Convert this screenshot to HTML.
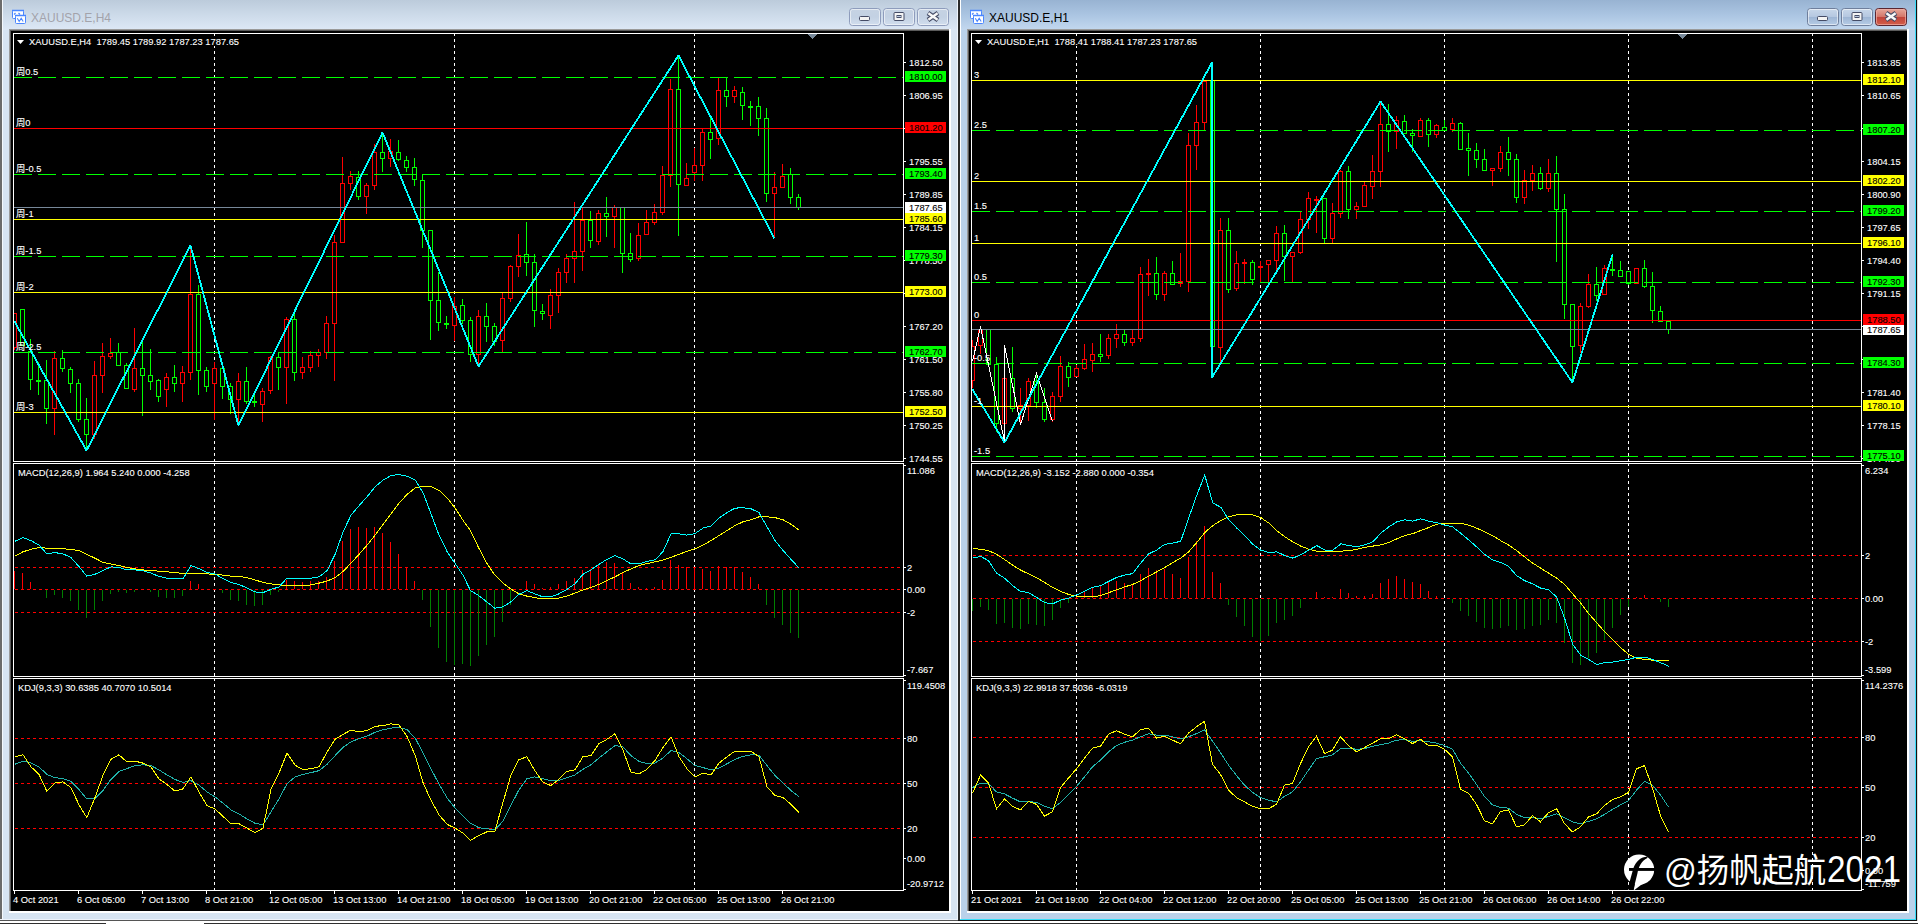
<!DOCTYPE html>
<html lang="zh"><head><meta charset="utf-8"><title>XAUUSD.E</title>
<style>html,body{margin:0;padding:0;background:#d7e4f2;overflow:hidden}svg text{white-space:pre}</style></head>
<body>
<svg width="1918" height="924" viewBox="0 0 1918 924" font-family="'Liberation Sans','Noto Sans CJK SC',sans-serif" style="display:block">
<defs>
<linearGradient id="gi" x1="0" y1="0" x2="0" y2="1"><stop offset="0" stop-color="#bccbdb"/><stop offset=".45" stop-color="#cbd9e8"/><stop offset="1" stop-color="#dde8f6"/></linearGradient>
<linearGradient id="ga" x1="0" y1="0" x2="0" y2="1"><stop offset="0" stop-color="#98b3d2"/><stop offset=".5" stop-color="#abc5e2"/><stop offset="1" stop-color="#c3d8ef"/></linearGradient>
<linearGradient id="gb" x1="0" y1="0" x2="0" y2="1"><stop offset="0" stop-color="#c9d8ea"/><stop offset=".5" stop-color="#b4c7e0"/><stop offset=".5" stop-color="#9db5d4"/><stop offset="1" stop-color="#b7cde6"/></linearGradient>
<linearGradient id="gbi" x1="0" y1="0" x2="0" y2="1"><stop offset="0" stop-color="#c6d3e3"/><stop offset=".5" stop-color="#c3d1e3"/><stop offset="1" stop-color="#d2deee"/></linearGradient>
<linearGradient id="gc" x1="0" y1="0" x2="0" y2="1"><stop offset="0" stop-color="#e7a99c"/><stop offset=".48" stop-color="#d4776a"/><stop offset=".5" stop-color="#c1433a"/><stop offset="1" stop-color="#d4604a"/></linearGradient>
</defs>
<rect x="0" y="0" width="1918" height="924" fill="#d7e4f2"/>
<rect x="0" y="0" width="960" height="924" fill="#d7e4f2"/>
<rect x="0" y="0" width="960" height="30" fill="url(#gi)"/>
<rect x="9" y="29" width="942" height="884" fill="#fff"/>
<rect x="9" y="29" width="940" height="882" fill="#9a9a9a"/>
<rect x="10" y="30" width="939" height="881" fill="#5a5a5a"/>
<rect x="11" y="31" width="938" height="880" fill="#000"/>
<g fill="#fff" stroke="#4a86ff"><rect x="12.5" y="10.5" width="11" height="8" rx="1"/><rect x="15.5" y="15.5" width="10" height="8" rx="1"/></g>
<path d="M12,10.5h12M15,15.5h11" stroke="#4a86ff" stroke-width="1.6" fill="none"/>
<path d="M14,14.5l1.5,-1.5M18.5,13l1.5,1.5" stroke="#4a86ff" stroke-width="1.2" fill="none"/>
<path d="M17.3,18.3l1.9,3.2l2,-3.2l2,3.2" stroke="#4a86ff" stroke-width="1.1" fill="none"/>
<text x="31" y="22" fill="#a3a3ab" font-size="12">XAUUSD.E,H4</text>
<rect x="849.5" y="8.5" width="31" height="17" rx="3" fill="url(#gbi)" stroke="#8e9cbc"/>
<rect x="850.5" y="9.5" width="29" height="15" rx="2" fill="none" stroke="#fff" stroke-opacity=".55"/>
<rect x="859.5" y="16.5" width="10" height="4" rx="1" fill="#f4f4f4" stroke="#454c66"/>
<rect x="883.5" y="8.5" width="31" height="17" rx="3" fill="url(#gbi)" stroke="#8e9cbc"/>
<rect x="884.5" y="9.5" width="29" height="15" rx="2" fill="none" stroke="#fff" stroke-opacity=".55"/>
<rect x="894.0" y="12.5" width="10" height="8" rx="1" fill="#f4f4f4" stroke="#454c66"/>
<rect x="897.0" y="15.5" width="4" height="2" fill="#b8c8e0" stroke="#454c66"/>
<rect x="917.5" y="8.5" width="31" height="17" rx="3" fill="url(#gbi)" stroke="#8e9cbc"/>
<rect x="918.5" y="9.5" width="29" height="15" rx="2" fill="none" stroke="#fff" stroke-opacity=".55"/>
<path d="M928.0,13l10,7M938.0,13l-10,7" stroke="#454c66" stroke-width="4.6" fill="none"/>
<path d="M928.4,13.3l9.2,6.4M937.6,13.3l-9.2,6.4" stroke="#f8f8f8" stroke-width="2.5" fill="none"/>
<rect x="960" y="0" width="958" height="924" fill="#b9d1ea"/>
<rect x="960" y="0" width="958" height="30" fill="url(#ga)"/>
<rect x="967" y="29" width="942" height="884" fill="#fff"/>
<rect x="967" y="29" width="940" height="882" fill="#9a9a9a"/>
<rect x="968" y="30" width="939" height="881" fill="#5a5a5a"/>
<rect x="969" y="31" width="938" height="880" fill="#000"/>
<g fill="#fff" stroke="#4a86ff"><rect x="970.5" y="10.5" width="11" height="8" rx="1"/><rect x="973.5" y="15.5" width="10" height="8" rx="1"/></g>
<path d="M970,10.5h12M973,15.5h11" stroke="#4a86ff" stroke-width="1.6" fill="none"/>
<path d="M972,14.5l1.5,-1.5M976.5,13l1.5,1.5" stroke="#4a86ff" stroke-width="1.2" fill="none"/>
<path d="M975.3,18.3l1.9,3.2l2,-3.2l2,3.2" stroke="#4a86ff" stroke-width="1.1" fill="none"/>
<text x="989" y="22" fill="#000" font-size="12">XAUUSD.E,H1</text>
<rect x="1807.5" y="8.5" width="31" height="17" rx="3" fill="url(#gb)" stroke="#6f7f9c"/>
<rect x="1808.5" y="9.5" width="29" height="15" rx="2" fill="none" stroke="#fff" stroke-opacity=".55"/>
<rect x="1817.5" y="16.5" width="10" height="4" rx="1" fill="#f4f4f4" stroke="#454c66"/>
<rect x="1841.5" y="8.5" width="31" height="17" rx="3" fill="url(#gb)" stroke="#6f7f9c"/>
<rect x="1842.5" y="9.5" width="29" height="15" rx="2" fill="none" stroke="#fff" stroke-opacity=".55"/>
<rect x="1852.0" y="12.5" width="10" height="8" rx="1" fill="#f4f4f4" stroke="#454c66"/>
<rect x="1855.0" y="15.5" width="4" height="2" fill="#b8c8e0" stroke="#454c66"/>
<rect x="1875.5" y="8.5" width="31" height="17" rx="3" fill="url(#gc)" stroke="#5a2630"/>
<rect x="1876.5" y="9.5" width="29" height="15" rx="2" fill="none" stroke="#f0b0a8" stroke-opacity=".7"/>
<path d="M1886.0,13l10,7M1896.0,13l-10,7" stroke="#454c66" stroke-width="4.6" fill="none"/>
<path d="M1886.4,13.3l9.2,6.4M1895.6,13.3l-9.2,6.4" stroke="#f8f8f8" stroke-width="2.5" fill="none"/>
<rect x="0" y="0" width="2" height="921" fill="#6b6b6b"/>
<rect x="958" y="0" width="2" height="921" fill="#2b2b2b"/>
<rect x="960" y="0" width="1" height="920" fill="#fff"/>
<rect x="957" y="0" width="1" height="920" fill="#eef4fb"/>
<rect x="1915" y="0" width="1" height="920" fill="#38dcf8"/>
<rect x="1916" y="0" width="1" height="921" fill="#111"/>
<rect x="1917" y="0" width="1" height="924" fill="#dcdcdc"/>
<rect x="2" y="0" width="1" height="920" fill="#f4f8fc"/>
<rect x="0" y="919" width="958" height="1" fill="#eef3fb"/>
<rect x="0" y="920" width="958" height="1" fill="#555"/>
<rect x="0" y="921" width="1918" height="2" fill="#fff"/>
<rect x="0" y="923" width="1918" height="1" fill="#303030"/>
<rect x="106" y="923" width="98" height="1" fill="#fff"/>
<rect x="960" y="919" width="956" height="1" fill="#38dcf8"/>
<rect x="958" y="920" width="959" height="1" fill="#111"/>
<rect x="13.5" y="33.5" width="890" height="428" fill="none" stroke="#fff"/>
<rect x="13.5" y="463.5" width="890" height="213" fill="none" stroke="#fff"/>
<rect x="13.5" y="678.5" width="890" height="212" fill="none" stroke="#fff"/>
<g shape-rendering="crispEdges">
<line x1="214.5" y1="33" x2="214.5" y2="462" stroke="#fff" stroke-dasharray="3 3"/>
<line x1="214.5" y1="463" x2="214.5" y2="677" stroke="#fff" stroke-dasharray="3 3"/>
<line x1="214.5" y1="678" x2="214.5" y2="891" stroke="#fff" stroke-dasharray="3 3"/>
<line x1="454.5" y1="33" x2="454.5" y2="462" stroke="#fff" stroke-dasharray="3 3"/>
<line x1="454.5" y1="463" x2="454.5" y2="677" stroke="#fff" stroke-dasharray="3 3"/>
<line x1="454.5" y1="678" x2="454.5" y2="891" stroke="#fff" stroke-dasharray="3 3"/>
<line x1="694.5" y1="33" x2="694.5" y2="462" stroke="#fff" stroke-dasharray="3 3"/>
<line x1="694.5" y1="463" x2="694.5" y2="677" stroke="#fff" stroke-dasharray="3 3"/>
<line x1="694.5" y1="678" x2="694.5" y2="891" stroke="#fff" stroke-dasharray="3 3"/>
<rect x="14" y="313" width="1" height="37" fill="#ff0000"/>
<rect x="12.5" y="313.5" width="4" height="34" fill="#000" stroke="#ff0000"/>
<rect x="22" y="309" width="1" height="36" fill="#00ff00"/>
<rect x="20.5" y="309.5" width="4" height="36" fill="#000" stroke="#00ff00"/>
<rect x="30" y="339" width="1" height="51" fill="#00ff00"/>
<rect x="28.5" y="351.5" width="4" height="28" fill="#000" stroke="#00ff00"/>
<rect x="38" y="362" width="1" height="33" fill="#00ff00"/>
<rect x="36.5" y="380.5" width="4" height="1" fill="#000" stroke="#00ff00"/>
<rect x="46" y="360" width="1" height="64" fill="#00ff00"/>
<rect x="44.5" y="380.5" width="4" height="28" fill="#000" stroke="#00ff00"/>
<rect x="54" y="351" width="1" height="84" fill="#ff0000"/>
<rect x="52.5" y="358.5" width="4" height="50" fill="#000" stroke="#ff0000"/>
<rect x="62" y="350" width="1" height="22" fill="#00ff00"/>
<rect x="60.5" y="358.5" width="4" height="10" fill="#000" stroke="#00ff00"/>
<rect x="70" y="367" width="1" height="26" fill="#00ff00"/>
<rect x="68.5" y="369.5" width="4" height="14" fill="#000" stroke="#00ff00"/>
<rect x="78" y="379" width="1" height="43" fill="#00ff00"/>
<rect x="76.5" y="383.5" width="4" height="36" fill="#000" stroke="#00ff00"/>
<rect x="86" y="398" width="1" height="52" fill="#00ff00"/>
<rect x="84.5" y="419.5" width="4" height="15" fill="#000" stroke="#00ff00"/>
<rect x="94" y="361" width="1" height="78" fill="#ff0000"/>
<rect x="92.5" y="375.5" width="4" height="59" fill="#000" stroke="#ff0000"/>
<rect x="102" y="343" width="1" height="50" fill="#ff0000"/>
<rect x="100.5" y="356.5" width="4" height="19" fill="#000" stroke="#ff0000"/>
<rect x="110" y="338" width="1" height="21" fill="#ff0000"/>
<rect x="108.5" y="353.5" width="4" height="3" fill="#000" stroke="#ff0000"/>
<rect x="118" y="343" width="1" height="22" fill="#00ff00"/>
<rect x="116.5" y="352.5" width="4" height="13" fill="#000" stroke="#00ff00"/>
<rect x="126" y="363" width="1" height="25" fill="#00ff00"/>
<rect x="124.5" y="365.5" width="4" height="23" fill="#000" stroke="#00ff00"/>
<rect x="134" y="328" width="1" height="64" fill="#ff0000"/>
<rect x="132.5" y="368.5" width="4" height="21" fill="#000" stroke="#ff0000"/>
<rect x="142" y="342" width="1" height="74" fill="#00ff00"/>
<rect x="140.5" y="368.5" width="4" height="7" fill="#000" stroke="#00ff00"/>
<rect x="150" y="349" width="1" height="41" fill="#00ff00"/>
<rect x="148.5" y="375.5" width="4" height="6" fill="#000" stroke="#00ff00"/>
<rect x="158" y="379" width="1" height="23" fill="#00ff00"/>
<rect x="156.5" y="380.5" width="4" height="16" fill="#000" stroke="#00ff00"/>
<rect x="166" y="373" width="1" height="34" fill="#ff0000"/>
<rect x="164.5" y="377.5" width="4" height="12" fill="#000" stroke="#ff0000"/>
<rect x="174" y="365" width="1" height="27" fill="#00ff00"/>
<rect x="172.5" y="377.5" width="4" height="6" fill="#000" stroke="#00ff00"/>
<rect x="182" y="366" width="1" height="36" fill="#ff0000"/>
<rect x="180.5" y="372.5" width="4" height="11" fill="#000" stroke="#ff0000"/>
<rect x="190" y="245" width="1" height="135" fill="#ff0000"/>
<rect x="188.5" y="294.5" width="4" height="78" fill="#000" stroke="#ff0000"/>
<rect x="198" y="285" width="1" height="110" fill="#00ff00"/>
<rect x="196.5" y="294.5" width="4" height="76" fill="#000" stroke="#00ff00"/>
<rect x="206" y="367" width="1" height="25" fill="#00ff00"/>
<rect x="204.5" y="370.5" width="4" height="16" fill="#000" stroke="#00ff00"/>
<rect x="214" y="362" width="1" height="58" fill="#ff0000"/>
<rect x="212.5" y="368.5" width="4" height="15" fill="#000" stroke="#ff0000"/>
<rect x="222" y="368" width="1" height="31" fill="#00ff00"/>
<rect x="220.5" y="368.5" width="4" height="18" fill="#000" stroke="#00ff00"/>
<rect x="230" y="383" width="1" height="31" fill="#00ff00"/>
<rect x="228.5" y="386.5" width="4" height="13" fill="#000" stroke="#00ff00"/>
<rect x="238" y="373" width="1" height="51" fill="#ff0000"/>
<rect x="236.5" y="381.5" width="4" height="18" fill="#000" stroke="#ff0000"/>
<rect x="246" y="367" width="1" height="37" fill="#00ff00"/>
<rect x="244.5" y="381.5" width="4" height="20" fill="#000" stroke="#00ff00"/>
<rect x="254" y="395" width="1" height="12" fill="#00ff00"/>
<rect x="252.5" y="401.5" width="4" height="1" fill="#000" stroke="#00ff00"/>
<rect x="262" y="388" width="1" height="34" fill="#ff0000"/>
<rect x="260.5" y="391.5" width="4" height="13" fill="#000" stroke="#ff0000"/>
<rect x="270" y="356" width="1" height="38" fill="#ff0000"/>
<rect x="268.5" y="357.5" width="4" height="33" fill="#000" stroke="#ff0000"/>
<rect x="278" y="352" width="1" height="38" fill="#00ff00"/>
<rect x="276.5" y="357.5" width="4" height="10" fill="#000" stroke="#00ff00"/>
<rect x="286" y="317" width="1" height="87" fill="#ff0000"/>
<rect x="284.5" y="319.5" width="4" height="48" fill="#000" stroke="#ff0000"/>
<rect x="294" y="314" width="1" height="67" fill="#00ff00"/>
<rect x="292.5" y="319.5" width="4" height="53" fill="#000" stroke="#00ff00"/>
<rect x="302" y="357" width="1" height="22" fill="#ff0000"/>
<rect x="300.5" y="367.5" width="4" height="5" fill="#000" stroke="#ff0000"/>
<rect x="310" y="351" width="1" height="21" fill="#ff0000"/>
<rect x="308.5" y="355.5" width="4" height="12" fill="#000" stroke="#ff0000"/>
<rect x="318" y="349" width="1" height="18" fill="#ff0000"/>
<rect x="316.5" y="352.5" width="4" height="3" fill="#000" stroke="#ff0000"/>
<rect x="326" y="316" width="1" height="43" fill="#ff0000"/>
<rect x="324.5" y="323.5" width="4" height="29" fill="#000" stroke="#ff0000"/>
<rect x="334" y="235" width="1" height="146" fill="#ff0000"/>
<rect x="332.5" y="242.5" width="4" height="81" fill="#000" stroke="#ff0000"/>
<rect x="342" y="157" width="1" height="85" fill="#ff0000"/>
<rect x="340.5" y="183.5" width="4" height="59" fill="#000" stroke="#ff0000"/>
<rect x="350" y="171" width="1" height="19" fill="#ff0000"/>
<rect x="348.5" y="176.5" width="4" height="7" fill="#000" stroke="#ff0000"/>
<rect x="358" y="171" width="1" height="29" fill="#00ff00"/>
<rect x="356.5" y="177.5" width="4" height="19" fill="#000" stroke="#00ff00"/>
<rect x="366" y="183" width="1" height="31" fill="#ff0000"/>
<rect x="364.5" y="185.5" width="4" height="11" fill="#000" stroke="#ff0000"/>
<rect x="374" y="144" width="1" height="46" fill="#ff0000"/>
<rect x="372.5" y="152.5" width="4" height="33" fill="#000" stroke="#ff0000"/>
<rect x="382" y="132" width="1" height="40" fill="#00ff00"/>
<rect x="380.5" y="152.5" width="4" height="6" fill="#000" stroke="#00ff00"/>
<rect x="390" y="139" width="1" height="28" fill="#ff0000"/>
<rect x="388.5" y="151.5" width="4" height="7" fill="#000" stroke="#ff0000"/>
<rect x="398" y="140" width="1" height="21" fill="#00ff00"/>
<rect x="396.5" y="152.5" width="4" height="7" fill="#000" stroke="#00ff00"/>
<rect x="406" y="156" width="1" height="16" fill="#00ff00"/>
<rect x="404.5" y="160.5" width="4" height="7" fill="#000" stroke="#00ff00"/>
<rect x="414" y="158" width="1" height="28" fill="#00ff00"/>
<rect x="412.5" y="167.5" width="4" height="12" fill="#000" stroke="#00ff00"/>
<rect x="422" y="174" width="1" height="74" fill="#00ff00"/>
<rect x="420.5" y="180.5" width="4" height="50" fill="#000" stroke="#00ff00"/>
<rect x="430" y="230" width="1" height="110" fill="#00ff00"/>
<rect x="428.5" y="230.5" width="4" height="70" fill="#000" stroke="#00ff00"/>
<rect x="438" y="272" width="1" height="59" fill="#00ff00"/>
<rect x="436.5" y="300.5" width="4" height="22" fill="#000" stroke="#00ff00"/>
<rect x="446" y="316" width="1" height="13" fill="#00ff00"/>
<rect x="444.5" y="323.5" width="4" height="1" fill="#000" stroke="#00ff00"/>
<rect x="454" y="297" width="1" height="44" fill="#ff0000"/>
<rect x="452.5" y="306.5" width="4" height="19" fill="#000" stroke="#ff0000"/>
<rect x="462" y="299" width="1" height="25" fill="#00ff00"/>
<rect x="460.5" y="305.5" width="4" height="15" fill="#000" stroke="#00ff00"/>
<rect x="470" y="317" width="1" height="45" fill="#00ff00"/>
<rect x="468.5" y="320.5" width="4" height="34" fill="#000" stroke="#00ff00"/>
<rect x="478" y="310" width="1" height="55" fill="#ff0000"/>
<rect x="476.5" y="316.5" width="4" height="38" fill="#000" stroke="#ff0000"/>
<rect x="486" y="303" width="1" height="39" fill="#00ff00"/>
<rect x="484.5" y="316.5" width="4" height="10" fill="#000" stroke="#00ff00"/>
<rect x="494" y="323" width="1" height="23" fill="#00ff00"/>
<rect x="492.5" y="326.5" width="4" height="15" fill="#000" stroke="#00ff00"/>
<rect x="502" y="292" width="1" height="60" fill="#ff0000"/>
<rect x="500.5" y="298.5" width="4" height="42" fill="#000" stroke="#ff0000"/>
<rect x="510" y="265" width="1" height="37" fill="#ff0000"/>
<rect x="508.5" y="266.5" width="4" height="32" fill="#000" stroke="#ff0000"/>
<rect x="518" y="234" width="1" height="43" fill="#ff0000"/>
<rect x="516.5" y="255.5" width="4" height="11" fill="#000" stroke="#ff0000"/>
<rect x="526" y="222" width="1" height="54" fill="#00ff00"/>
<rect x="524.5" y="254.5" width="4" height="8" fill="#000" stroke="#00ff00"/>
<rect x="534" y="254" width="1" height="73" fill="#00ff00"/>
<rect x="532.5" y="262.5" width="4" height="48" fill="#000" stroke="#00ff00"/>
<rect x="542" y="304" width="1" height="16" fill="#00ff00"/>
<rect x="540.5" y="311.5" width="4" height="2" fill="#000" stroke="#00ff00"/>
<rect x="550" y="289" width="1" height="40" fill="#ff0000"/>
<rect x="548.5" y="295.5" width="4" height="20" fill="#000" stroke="#ff0000"/>
<rect x="558" y="268" width="1" height="45" fill="#ff0000"/>
<rect x="556.5" y="272.5" width="4" height="23" fill="#000" stroke="#ff0000"/>
<rect x="566" y="254" width="1" height="29" fill="#ff0000"/>
<rect x="564.5" y="258.5" width="4" height="14" fill="#000" stroke="#ff0000"/>
<rect x="574" y="202" width="1" height="81" fill="#ff0000"/>
<rect x="572.5" y="251.5" width="4" height="7" fill="#000" stroke="#ff0000"/>
<rect x="582" y="208" width="1" height="63" fill="#ff0000"/>
<rect x="580.5" y="220.5" width="4" height="31" fill="#000" stroke="#ff0000"/>
<rect x="590" y="211" width="1" height="37" fill="#00ff00"/>
<rect x="588.5" y="220.5" width="4" height="20" fill="#000" stroke="#00ff00"/>
<rect x="598" y="210" width="1" height="35" fill="#ff0000"/>
<rect x="596.5" y="213.5" width="4" height="28" fill="#000" stroke="#ff0000"/>
<rect x="606" y="197" width="1" height="40" fill="#00ff00"/>
<rect x="604.5" y="213.5" width="4" height="3" fill="#000" stroke="#00ff00"/>
<rect x="614" y="205" width="1" height="43" fill="#ff0000"/>
<rect x="612.5" y="207.5" width="4" height="9" fill="#000" stroke="#ff0000"/>
<rect x="622" y="207" width="1" height="66" fill="#00ff00"/>
<rect x="620.5" y="207.5" width="4" height="46" fill="#000" stroke="#00ff00"/>
<rect x="630" y="233" width="1" height="29" fill="#00ff00"/>
<rect x="628.5" y="253.5" width="4" height="6" fill="#000" stroke="#00ff00"/>
<rect x="638" y="223" width="1" height="38" fill="#ff0000"/>
<rect x="636.5" y="235.5" width="4" height="23" fill="#000" stroke="#ff0000"/>
<rect x="646" y="210" width="1" height="24" fill="#ff0000"/>
<rect x="644.5" y="222.5" width="4" height="12" fill="#000" stroke="#ff0000"/>
<rect x="654" y="204" width="1" height="21" fill="#ff0000"/>
<rect x="652.5" y="212.5" width="4" height="10" fill="#000" stroke="#ff0000"/>
<rect x="662" y="166" width="1" height="49" fill="#ff0000"/>
<rect x="660.5" y="175.5" width="4" height="37" fill="#000" stroke="#ff0000"/>
<rect x="670" y="79" width="1" height="108" fill="#ff0000"/>
<rect x="668.5" y="89.5" width="4" height="86" fill="#000" stroke="#ff0000"/>
<rect x="678" y="55" width="1" height="181" fill="#00ff00"/>
<rect x="676.5" y="89.5" width="4" height="95" fill="#000" stroke="#00ff00"/>
<rect x="686" y="163" width="1" height="23" fill="#ff0000"/>
<rect x="684.5" y="178.5" width="4" height="7" fill="#000" stroke="#ff0000"/>
<rect x="694" y="148" width="1" height="33" fill="#ff0000"/>
<rect x="692.5" y="165.5" width="4" height="7" fill="#000" stroke="#ff0000"/>
<rect x="702" y="128" width="1" height="53" fill="#ff0000"/>
<rect x="700.5" y="132.5" width="4" height="33" fill="#000" stroke="#ff0000"/>
<rect x="710" y="118" width="1" height="41" fill="#00ff00"/>
<rect x="708.5" y="132.5" width="4" height="7" fill="#000" stroke="#00ff00"/>
<rect x="718" y="78" width="1" height="67" fill="#ff0000"/>
<rect x="716.5" y="90.5" width="4" height="48" fill="#000" stroke="#ff0000"/>
<rect x="726" y="78" width="1" height="29" fill="#00ff00"/>
<rect x="724.5" y="90.5" width="4" height="6" fill="#000" stroke="#00ff00"/>
<rect x="734" y="86" width="1" height="17" fill="#ff0000"/>
<rect x="732.5" y="90.5" width="4" height="6" fill="#000" stroke="#ff0000"/>
<rect x="742" y="87" width="1" height="33" fill="#00ff00"/>
<rect x="740.5" y="92.5" width="4" height="13" fill="#000" stroke="#00ff00"/>
<rect x="750" y="101" width="1" height="25" fill="#00ff00"/>
<rect x="748.5" y="106.5" width="4" height="1" fill="#000" stroke="#00ff00"/>
<rect x="758" y="97" width="1" height="39" fill="#00ff00"/>
<rect x="756.5" y="106.5" width="4" height="12" fill="#000" stroke="#00ff00"/>
<rect x="766" y="108" width="1" height="94" fill="#00ff00"/>
<rect x="764.5" y="118.5" width="4" height="75" fill="#000" stroke="#00ff00"/>
<rect x="774" y="172" width="1" height="66" fill="#ff0000"/>
<rect x="772.5" y="187.5" width="4" height="6" fill="#000" stroke="#ff0000"/>
<rect x="782" y="164" width="1" height="23" fill="#ff0000"/>
<rect x="780.5" y="176.5" width="4" height="11" fill="#000" stroke="#ff0000"/>
<rect x="790" y="168" width="1" height="36" fill="#00ff00"/>
<rect x="788.5" y="174.5" width="4" height="23" fill="#000" stroke="#00ff00"/>
<rect x="798" y="194" width="1" height="16" fill="#00ff00"/>
<rect x="796.5" y="197.5" width="4" height="10" fill="#000" stroke="#00ff00"/>
<rect x="11" y="34" width="2" height="427" fill="#000"/>
<rect x="13" y="33" width="1" height="429" fill="#fff"/>
<line x1="14" y1="77.5" x2="903" y2="77.5" stroke="#00ff00" stroke-dasharray="18 6"/>
<rect x="14" y="128" width="889" height="1" fill="#ff0000"/>
<line x1="14" y1="174.5" x2="903" y2="174.5" stroke="#00ff00" stroke-dasharray="18 6"/>
<rect x="14" y="207" width="889" height="1" fill="#778899"/>
<rect x="14" y="219" width="889" height="1" fill="#ffff00"/>
<line x1="14" y1="256.5" x2="903" y2="256.5" stroke="#00ff00" stroke-dasharray="18 6"/>
<rect x="14" y="292" width="889" height="1" fill="#ffff00"/>
<line x1="14" y1="352.5" x2="903" y2="352.5" stroke="#00ff00" stroke-dasharray="18 6"/>
<rect x="14" y="412" width="889" height="1" fill="#ffff00"/>
<polyline points="14.5,321.5 86.5,450.5 190.5,245.5 238.5,425.5 382.5,132.5 478.5,366.5 678.5,55.5 774.5,238.5" fill="none" stroke="#00ffff" stroke-width="1.8" stroke-linejoin="round"/>
<path d="M808,34h9l-4.5,5z" fill="#778899"/>
<line x1="15" y1="567.5" x2="903" y2="567.5" stroke="#ff0000" stroke-dasharray="3 3"/>
<line x1="15" y1="589.5" x2="903" y2="589.5" stroke="#ff0000" stroke-dasharray="3 3"/>
<line x1="15" y1="612.5" x2="903" y2="612.5" stroke="#ff0000" stroke-dasharray="3 3"/>
<rect x="14" y="571" width="1" height="18" fill="#ff0000"/>
<rect x="22" y="573" width="1" height="16" fill="#ff0000"/>
<rect x="30" y="582" width="1" height="7" fill="#ff0000"/>
<rect x="46" y="590" width="1" height="8" fill="#008000"/>
<rect x="54" y="590" width="1" height="5" fill="#008000"/>
<rect x="62" y="590" width="1" height="8" fill="#008000"/>
<rect x="70" y="590" width="1" height="11" fill="#008000"/>
<rect x="78" y="590" width="1" height="20" fill="#008000"/>
<rect x="86" y="590" width="1" height="28" fill="#008000"/>
<rect x="94" y="590" width="1" height="20" fill="#008000"/>
<rect x="102" y="590" width="1" height="11" fill="#008000"/>
<rect x="110" y="590" width="1" height="4" fill="#008000"/>
<rect x="118" y="590" width="1" height="2" fill="#008000"/>
<rect x="126" y="590" width="1" height="3" fill="#008000"/>
<rect x="134" y="590" width="1" height="2" fill="#008000"/>
<rect x="150" y="590" width="1" height="2" fill="#008000"/>
<rect x="158" y="590" width="1" height="7" fill="#008000"/>
<rect x="166" y="590" width="1" height="8" fill="#008000"/>
<rect x="174" y="590" width="1" height="8" fill="#008000"/>
<rect x="182" y="590" width="1" height="6" fill="#008000"/>
<rect x="190" y="581" width="1" height="8" fill="#ff0000"/>
<rect x="198" y="584" width="1" height="5" fill="#ff0000"/>
<rect x="222" y="590" width="1" height="3" fill="#008000"/>
<rect x="230" y="590" width="1" height="10" fill="#008000"/>
<rect x="238" y="590" width="1" height="11" fill="#008000"/>
<rect x="246" y="590" width="1" height="15" fill="#008000"/>
<rect x="254" y="590" width="1" height="16" fill="#008000"/>
<rect x="262" y="590" width="1" height="15" fill="#008000"/>
<rect x="270" y="590" width="1" height="5" fill="#008000"/>
<rect x="278" y="590" width="1" height="2" fill="#008000"/>
<rect x="286" y="580" width="1" height="9" fill="#ff0000"/>
<rect x="294" y="581" width="1" height="8" fill="#ff0000"/>
<rect x="302" y="582" width="1" height="7" fill="#ff0000"/>
<rect x="310" y="581" width="1" height="8" fill="#ff0000"/>
<rect x="318" y="581" width="1" height="8" fill="#ff0000"/>
<rect x="326" y="577" width="1" height="12" fill="#ff0000"/>
<rect x="334" y="561" width="1" height="28" fill="#ff0000"/>
<rect x="342" y="541" width="1" height="48" fill="#ff0000"/>
<rect x="350" y="529" width="1" height="60" fill="#ff0000"/>
<rect x="358" y="527" width="1" height="62" fill="#ff0000"/>
<rect x="366" y="528" width="1" height="61" fill="#ff0000"/>
<rect x="374" y="527" width="1" height="62" fill="#ff0000"/>
<rect x="382" y="533" width="1" height="56" fill="#ff0000"/>
<rect x="390" y="542" width="1" height="47" fill="#ff0000"/>
<rect x="398" y="554" width="1" height="35" fill="#ff0000"/>
<rect x="406" y="567" width="1" height="22" fill="#ff0000"/>
<rect x="414" y="581" width="1" height="8" fill="#ff0000"/>
<rect x="422" y="590" width="1" height="10" fill="#008000"/>
<rect x="430" y="590" width="1" height="37" fill="#008000"/>
<rect x="438" y="590" width="1" height="58" fill="#008000"/>
<rect x="446" y="590" width="1" height="72" fill="#008000"/>
<rect x="454" y="590" width="1" height="75" fill="#008000"/>
<rect x="462" y="590" width="1" height="74" fill="#008000"/>
<rect x="470" y="590" width="1" height="76" fill="#008000"/>
<rect x="478" y="590" width="1" height="66" fill="#008000"/>
<rect x="486" y="590" width="1" height="55" fill="#008000"/>
<rect x="494" y="590" width="1" height="47" fill="#008000"/>
<rect x="502" y="590" width="1" height="32" fill="#008000"/>
<rect x="510" y="590" width="1" height="15" fill="#008000"/>
<rect x="526" y="581" width="1" height="8" fill="#ff0000"/>
<rect x="534" y="584" width="1" height="5" fill="#ff0000"/>
<rect x="542" y="588" width="1" height="1" fill="#ff0000"/>
<rect x="550" y="587" width="1" height="2" fill="#ff0000"/>
<rect x="558" y="584" width="1" height="5" fill="#ff0000"/>
<rect x="566" y="581" width="1" height="8" fill="#ff0000"/>
<rect x="574" y="578" width="1" height="11" fill="#ff0000"/>
<rect x="582" y="570" width="1" height="19" fill="#ff0000"/>
<rect x="590" y="569" width="1" height="20" fill="#ff0000"/>
<rect x="598" y="564" width="1" height="25" fill="#ff0000"/>
<rect x="606" y="562" width="1" height="27" fill="#ff0000"/>
<rect x="614" y="563" width="1" height="26" fill="#ff0000"/>
<rect x="622" y="572" width="1" height="17" fill="#ff0000"/>
<rect x="630" y="583" width="1" height="6" fill="#ff0000"/>
<rect x="638" y="587" width="1" height="2" fill="#ff0000"/>
<rect x="646" y="588" width="1" height="1" fill="#ff0000"/>
<rect x="654" y="587" width="1" height="2" fill="#ff0000"/>
<rect x="662" y="580" width="1" height="9" fill="#ff0000"/>
<rect x="670" y="560" width="1" height="29" fill="#ff0000"/>
<rect x="678" y="565" width="1" height="24" fill="#ff0000"/>
<rect x="686" y="567" width="1" height="22" fill="#ff0000"/>
<rect x="694" y="568" width="1" height="21" fill="#ff0000"/>
<rect x="702" y="569" width="1" height="20" fill="#ff0000"/>
<rect x="710" y="571" width="1" height="18" fill="#ff0000"/>
<rect x="718" y="566" width="1" height="23" fill="#ff0000"/>
<rect x="726" y="567" width="1" height="22" fill="#ff0000"/>
<rect x="734" y="567" width="1" height="22" fill="#ff0000"/>
<rect x="742" y="572" width="1" height="17" fill="#ff0000"/>
<rect x="750" y="577" width="1" height="12" fill="#ff0000"/>
<rect x="758" y="584" width="1" height="5" fill="#ff0000"/>
<rect x="766" y="590" width="1" height="15" fill="#008000"/>
<rect x="774" y="590" width="1" height="28" fill="#008000"/>
<rect x="782" y="590" width="1" height="35" fill="#008000"/>
<rect x="790" y="590" width="1" height="43" fill="#008000"/>
<rect x="798" y="590" width="1" height="48" fill="#008000"/>
<polyline points="14.8,556.1 23.0,551.8 31.0,549.3 39.0,547.6 46.8,548.1 54.8,548.3 62.8,548.8 70.8,549.3 78.8,550.6 86.8,554.3 94.8,558.1 102.9,562.4 110.9,563.9 118.9,565.6 126.9,567.4 134.9,568.9 142.9,569.9 150.9,570.6 158.9,571.1 166.9,571.9 174.9,572.4 182.9,573.6 190.9,573.6 198.9,573.6 207.0,573.9 215.0,574.4 223.0,575.1 231.0,576.1 239.0,576.4 247.0,577.6 255.0,579.9 263.0,582.4 271.0,583.9 279.0,584.9 287.0,585.6 295.0,585.9 303.1,585.9 311.1,584.9 319.1,583.1 327.1,581.1 335.1,577.6 343.1,571.4 351.1,563.1 359.1,554.3 367.1,545.1 375.1,535.1 383.1,524.3 391.1,513.6 399.1,503.0 407.2,494.3 415.2,488.0 423.2,486.0 431.2,486.8 439.2,490.5 447.2,498.0 455.2,508.1 463.2,520.6 470.5,530.6 478.8,548.1 486.8,563.1 494.8,575.1 502.8,583.1 510.8,588.9 518.8,593.9 526.8,596.1 534.8,597.6 542.8,598.9 550.8,598.9 558.8,598.1 566.8,596.1 574.9,593.1 582.9,589.9 590.9,587.4 598.9,584.4 606.9,580.6 614.9,576.9 622.9,572.6 630.9,568.9 638.9,565.6 646.9,563.6 654.9,561.9 662.9,560.1 671.0,557.4 679.0,554.3 687.0,551.3 695.0,548.8 703.0,545.1 711.0,540.6 719.0,535.6 727.0,530.6 735.0,525.6 743.0,521.8 751.0,519.8 759.0,516.8 767.0,516.8 775.1,517.6 783.1,519.8 791.1,524.3 799.1,530.1" fill="none" stroke="#ffff00" stroke-width="1"/>
<polyline points="14.8,541.3 23.0,537.6 31.0,540.6 39.0,545.1 46.8,553.8 54.8,552.6 62.8,553.8 70.8,557.4 78.8,566.4 86.8,576.1 94.8,574.4 102.9,570.6 110.9,566.9 118.9,567.4 126.9,569.9 134.9,569.9 142.9,570.6 150.9,573.1 158.9,576.4 166.9,578.1 174.9,578.9 182.9,578.9 190.9,565.6 198.9,568.6 207.0,572.4 215.0,573.9 223.0,578.6 231.0,582.6 239.0,584.4 247.0,588.1 255.0,591.9 263.0,592.6 271.0,589.4 279.0,586.9 287.0,578.1 295.0,578.9 303.1,578.9 311.1,578.1 319.1,576.9 327.1,570.6 335.1,554.3 343.1,531.8 351.1,515.1 359.1,505.6 367.1,496.8 375.1,486.8 383.1,480.0 391.1,475.5 399.1,474.5 407.2,476.3 415.2,480.0 423.2,493.0 431.2,514.3 439.2,535.6 447.2,551.8 455.2,563.6 463.2,575.6 470.5,590.6 478.8,595.6 486.8,601.9 494.8,608.2 502.8,606.9 510.8,601.9 518.8,594.4 526.8,590.6 534.8,593.9 542.8,596.9 550.8,596.9 558.8,593.9 566.8,589.4 574.9,583.9 582.9,574.4 590.9,569.9 598.9,564.4 606.9,559.4 614.9,555.6 622.9,558.9 630.9,563.9 638.9,563.9 646.9,561.4 654.9,559.9 662.9,551.8 671.0,533.8 679.0,533.8 687.0,535.1 695.0,533.6 703.0,528.1 711.0,526.1 719.0,518.1 727.0,512.6 735.0,508.1 743.0,507.8 751.0,508.8 759.0,512.6 767.0,526.8 775.1,540.6 783.1,550.6 791.1,559.4 799.1,568.1" fill="none" stroke="#00ffff" stroke-width="1"/>
<line x1="15" y1="738.5" x2="903" y2="738.5" stroke="#ff0000" stroke-dasharray="3 3"/>
<line x1="15" y1="783.5" x2="903" y2="783.5" stroke="#ff0000" stroke-dasharray="3 3"/>
<line x1="15" y1="828.5" x2="903" y2="828.5" stroke="#ff0000" stroke-dasharray="3 3"/>
<polyline points="14.8,764.3 23.0,761.1 31.0,763.1 39.0,766.8 46.8,774.4 54.8,777.6 62.8,778.6 70.8,781.4 78.8,789.4 86.8,798.9 94.8,798.6 102.9,790.6 110.9,779.4 118.9,771.4 126.9,768.6 134.9,765.6 142.9,764.8 150.9,765.6 158.9,769.8 166.9,774.9 174.9,779.4 182.9,782.4 190.9,780.6 198.9,785.1 207.0,791.9 215.0,796.9 223.0,803.1 231.0,809.9 239.0,813.9 247.0,818.9 255.0,823.2 263.0,824.9 271.0,811.9 279.0,798.9 287.0,783.9 295.0,776.9 303.1,774.4 311.1,772.6 319.1,770.6 327.1,764.3 335.1,755.6 343.1,747.3 351.1,741.8 359.1,738.6 367.1,736.1 375.1,732.3 383.1,729.8 391.1,728.1 399.1,727.3 407.2,729.8 415.2,738.1 423.2,753.1 431.2,769.3 439.2,784.4 447.2,798.1 455.2,808.1 463.2,816.1 470.5,823.2 478.8,827.7 486.8,828.7 494.8,829.9 502.8,821.4 510.8,805.6 518.8,790.1 526.8,778.9 534.8,776.9 542.8,778.6 550.8,780.6 558.8,780.6 566.8,777.6 574.9,774.9 582.9,769.3 590.9,764.8 598.9,758.1 606.9,751.8 614.9,745.6 622.9,746.8 630.9,755.6 638.9,761.3 646.9,763.6 654.9,763.1 662.9,758.1 671.0,750.6 679.0,752.6 687.0,758.8 695.0,765.6 703.0,767.6 711.0,769.8 719.0,768.1 727.0,763.8 735.0,759.3 743.0,756.3 751.0,754.8 759.0,755.1 767.0,765.6 775.1,775.6 783.1,783.1 791.1,790.6 799.1,796.9" fill="none" stroke="#20b2aa" stroke-width="1"/>
<polyline points="14.8,756.8 23.0,754.8 31.0,766.8 39.0,774.4 46.8,791.1 54.8,783.1 62.8,781.9 70.8,787.4 78.8,804.4 86.8,817.6 94.8,798.1 102.9,775.6 110.9,759.3 118.9,754.8 126.9,761.8 134.9,761.1 142.9,763.1 150.9,766.8 158.9,778.9 166.9,784.4 174.9,791.1 182.9,788.9 190.9,776.9 198.9,791.9 207.0,805.6 215.0,808.9 223.0,816.4 231.0,823.7 239.0,823.7 247.0,828.2 255.0,832.7 263.0,828.2 271.0,789.4 279.0,773.1 287.0,753.1 295.0,765.1 303.1,769.8 311.1,768.6 319.1,766.8 327.1,751.8 335.1,739.3 343.1,734.3 351.1,730.1 359.1,731.8 367.1,730.6 375.1,726.3 383.1,725.6 391.1,723.8 399.1,725.1 407.2,736.8 415.2,755.6 423.2,783.1 431.2,800.6 439.2,815.1 447.2,824.4 455.2,828.2 463.2,833.2 470.5,840.2 478.8,835.7 486.8,831.9 494.8,831.4 502.8,803.1 510.8,775.6 518.8,759.8 526.8,756.8 534.8,770.6 542.8,781.9 550.8,785.6 558.8,779.4 566.8,771.4 574.9,769.8 582.9,756.8 590.9,755.6 598.9,743.8 606.9,739.3 614.9,733.8 622.9,750.1 630.9,771.9 638.9,773.9 646.9,769.3 654.9,760.6 662.9,747.6 671.0,736.8 679.0,756.8 687.0,768.8 695.0,776.9 703.0,773.1 711.0,774.9 719.0,763.1 727.0,756.8 735.0,751.1 743.0,751.1 751.0,751.1 759.0,756.8 767.0,786.9 775.1,795.6 783.1,797.6 791.1,804.4 799.1,812.4" fill="none" stroke="#ffff00" stroke-width="1"/>
</g>
<text x="16" y="75" fill="#fff" font-size="9.33" stroke="#fff" stroke-width=".1">周0.5</text>
<text x="16" y="126" fill="#fff" font-size="9.33" stroke="#fff" stroke-width=".1">周0</text>
<text x="16" y="172" fill="#fff" font-size="9.33" stroke="#fff" stroke-width=".1">周-0.5</text>
<text x="16" y="217" fill="#fff" font-size="9.33" stroke="#fff" stroke-width=".1">周-1</text>
<text x="16" y="254" fill="#fff" font-size="9.33" stroke="#fff" stroke-width=".1">周-1.5</text>
<text x="16" y="290" fill="#fff" font-size="9.33" stroke="#fff" stroke-width=".1">周-2</text>
<text x="16" y="350" fill="#fff" font-size="9.33" stroke="#fff" stroke-width=".1">周-2.5</text>
<text x="16" y="410" fill="#fff" font-size="9.33" stroke="#fff" stroke-width=".1">周-3</text>
<rect x="16" y="36" width="228" height="10" fill="#000"/>
<path d="M17,40h7l-3.5,4z" fill="#fff"/>
<text x="29" y="45" fill="#fff" font-size="9.33" stroke="#fff" stroke-width=".1">XAUUSD.E,H4  1789.45 1789.92 1787.23 1787.65</text>
<text x="18" y="476" fill="#fff" font-size="9.33" stroke="#fff" stroke-width=".1">MACD(12,26,9) 1.964 5.240 0.000 -4.258</text>
<text x="18" y="691" fill="#fff" font-size="9.33" stroke="#fff" stroke-width=".1">KDJ(9,3,3) 30.6385 40.7070 10.5014</text>
<rect x="903" y="62" width="3" height="1" fill="#fff"/>
<text x="909" y="66" fill="#fff" font-size="9.33" stroke="#fff" stroke-width=".1">1812.50</text>
<rect x="903" y="95" width="3" height="1" fill="#fff"/>
<text x="909" y="99" fill="#fff" font-size="9.33" stroke="#fff" stroke-width=".1">1806.95</text>
<rect x="903" y="128" width="3" height="1" fill="#fff"/>
<text x="909" y="132" fill="#fff" font-size="9.33" stroke="#fff" stroke-width=".1">1801.25</text>
<rect x="903" y="161" width="3" height="1" fill="#fff"/>
<text x="909" y="165" fill="#fff" font-size="9.33" stroke="#fff" stroke-width=".1">1795.55</text>
<rect x="903" y="194" width="3" height="1" fill="#fff"/>
<text x="909" y="198" fill="#fff" font-size="9.33" stroke="#fff" stroke-width=".1">1789.85</text>
<rect x="903" y="227" width="3" height="1" fill="#fff"/>
<text x="909" y="231" fill="#fff" font-size="9.33" stroke="#fff" stroke-width=".1">1784.15</text>
<rect x="903" y="260" width="3" height="1" fill="#fff"/>
<text x="909" y="264" fill="#fff" font-size="9.33" stroke="#fff" stroke-width=".1">1778.50</text>
<rect x="903" y="293" width="3" height="1" fill="#fff"/>
<text x="909" y="297" fill="#fff" font-size="9.33" stroke="#fff" stroke-width=".1">1772.85</text>
<rect x="903" y="326" width="3" height="1" fill="#fff"/>
<text x="909" y="330" fill="#fff" font-size="9.33" stroke="#fff" stroke-width=".1">1767.20</text>
<rect x="903" y="359" width="3" height="1" fill="#fff"/>
<text x="909" y="363" fill="#fff" font-size="9.33" stroke="#fff" stroke-width=".1">1761.50</text>
<rect x="903" y="392" width="3" height="1" fill="#fff"/>
<text x="909" y="396" fill="#fff" font-size="9.33" stroke="#fff" stroke-width=".1">1755.80</text>
<rect x="903" y="425" width="3" height="1" fill="#fff"/>
<text x="909" y="429" fill="#fff" font-size="9.33" stroke="#fff" stroke-width=".1">1750.25</text>
<rect x="903" y="458" width="3" height="1" fill="#fff"/>
<text x="909" y="462" fill="#fff" font-size="9.33" stroke="#fff" stroke-width=".1">1744.55</text>
<rect x="905" y="71" width="41" height="11" fill="#00ff00"/>
<text x="909" y="80" fill="#000" font-size="9.33" stroke="#000" stroke-width=".1">1810.00</text>
<rect x="905" y="122" width="41" height="11" fill="#ff0000"/>
<text x="909" y="131" fill="#000" font-size="9.33" stroke="#000" stroke-width=".1">1801.20</text>
<rect x="905" y="168" width="41" height="11" fill="#00ff00"/>
<text x="909" y="177" fill="#000" font-size="9.33" stroke="#000" stroke-width=".1">1793.40</text>
<rect x="905" y="202" width="41" height="11" fill="#fff"/>
<text x="909" y="211" fill="#000" font-size="9.33" stroke="#000" stroke-width=".1">1787.65</text>
<rect x="905" y="213" width="41" height="11" fill="#ffff00"/>
<text x="909" y="222" fill="#000" font-size="9.33" stroke="#000" stroke-width=".1">1785.60</text>
<rect x="905" y="250" width="41" height="11" fill="#00ff00"/>
<text x="909" y="259" fill="#000" font-size="9.33" stroke="#000" stroke-width=".1">1779.30</text>
<rect x="905" y="286" width="41" height="11" fill="#ffff00"/>
<text x="909" y="295" fill="#000" font-size="9.33" stroke="#000" stroke-width=".1">1773.00</text>
<rect x="905" y="346" width="41" height="11" fill="#00ff00"/>
<text x="909" y="355" fill="#000" font-size="9.33" stroke="#000" stroke-width=".1">1762.70</text>
<rect x="905" y="406" width="41" height="11" fill="#ffff00"/>
<text x="909" y="415" fill="#000" font-size="9.33" stroke="#000" stroke-width=".1">1752.50</text>
<text x="907" y="474" fill="#fff" font-size="9.33" stroke="#fff" stroke-width=".1">11.086</text>
<text x="907" y="673" fill="#fff" font-size="9.33" stroke="#fff" stroke-width=".1">-7.667</text>
<text x="907" y="689" fill="#fff" font-size="9.33" stroke="#fff" stroke-width=".1">119.4508</text>
<text x="907" y="862" fill="#fff" font-size="9.33" stroke="#fff" stroke-width=".1">0.00</text>
<rect x="903" y="858" width="3" height="1" fill="#fff"/>
<text x="907" y="887" fill="#fff" font-size="9.33" stroke="#fff" stroke-width=".1">-20.9712</text>
<rect x="903" y="465" width="3" height="1" fill="#fff"/>
<rect x="903" y="675" width="3" height="1" fill="#fff"/>
<rect x="903" y="680" width="3" height="1" fill="#fff"/>
<rect x="903" y="889" width="3" height="1" fill="#fff"/>
<rect x="903" y="567" width="3" height="1" fill="#fff"/>
<text x="907" y="571" fill="#fff" font-size="9.33" stroke="#fff" stroke-width=".1">2</text>
<rect x="903" y="589" width="3" height="1" fill="#fff"/>
<text x="907" y="593" fill="#fff" font-size="9.33" stroke="#fff" stroke-width=".1">0.00</text>
<rect x="903" y="612" width="3" height="1" fill="#fff"/>
<text x="907" y="616" fill="#fff" font-size="9.33" stroke="#fff" stroke-width=".1">-2</text>
<rect x="903" y="738" width="3" height="1" fill="#fff"/>
<text x="907" y="742" fill="#fff" font-size="9.33" stroke="#fff" stroke-width=".1">80</text>
<rect x="903" y="783" width="3" height="1" fill="#fff"/>
<text x="907" y="787" fill="#fff" font-size="9.33" stroke="#fff" stroke-width=".1">50</text>
<rect x="903" y="828" width="3" height="1" fill="#fff"/>
<text x="907" y="832" fill="#fff" font-size="9.33" stroke="#fff" stroke-width=".1">20</text>
<rect x="14" y="891" width="1" height="3" fill="#fff"/>
<text x="13" y="903" fill="#fff" font-size="9.33" stroke="#fff" stroke-width=".1">4 Oct 2021</text>
<rect x="78" y="891" width="1" height="3" fill="#fff"/>
<text x="77" y="903" fill="#fff" font-size="9.33" stroke="#fff" stroke-width=".1">6 Oct 05:00</text>
<rect x="142" y="891" width="1" height="3" fill="#fff"/>
<text x="141" y="903" fill="#fff" font-size="9.33" stroke="#fff" stroke-width=".1">7 Oct 13:00</text>
<rect x="206" y="891" width="1" height="3" fill="#fff"/>
<text x="205" y="903" fill="#fff" font-size="9.33" stroke="#fff" stroke-width=".1">8 Oct 21:00</text>
<rect x="270" y="891" width="1" height="3" fill="#fff"/>
<text x="269" y="903" fill="#fff" font-size="9.33" stroke="#fff" stroke-width=".1">12 Oct 05:00</text>
<rect x="334" y="891" width="1" height="3" fill="#fff"/>
<text x="333" y="903" fill="#fff" font-size="9.33" stroke="#fff" stroke-width=".1">13 Oct 13:00</text>
<rect x="398" y="891" width="1" height="3" fill="#fff"/>
<text x="397" y="903" fill="#fff" font-size="9.33" stroke="#fff" stroke-width=".1">14 Oct 21:00</text>
<rect x="462" y="891" width="1" height="3" fill="#fff"/>
<text x="461" y="903" fill="#fff" font-size="9.33" stroke="#fff" stroke-width=".1">18 Oct 05:00</text>
<rect x="526" y="891" width="1" height="3" fill="#fff"/>
<text x="525" y="903" fill="#fff" font-size="9.33" stroke="#fff" stroke-width=".1">19 Oct 13:00</text>
<rect x="590" y="891" width="1" height="3" fill="#fff"/>
<text x="589" y="903" fill="#fff" font-size="9.33" stroke="#fff" stroke-width=".1">20 Oct 21:00</text>
<rect x="654" y="891" width="1" height="3" fill="#fff"/>
<text x="653" y="903" fill="#fff" font-size="9.33" stroke="#fff" stroke-width=".1">22 Oct 05:00</text>
<rect x="718" y="891" width="1" height="3" fill="#fff"/>
<text x="717" y="903" fill="#fff" font-size="9.33" stroke="#fff" stroke-width=".1">25 Oct 13:00</text>
<rect x="782" y="891" width="1" height="3" fill="#fff"/>
<text x="781" y="903" fill="#fff" font-size="9.33" stroke="#fff" stroke-width=".1">26 Oct 21:00</text>
<rect x="971.5" y="33.5" width="890" height="428" fill="none" stroke="#fff"/>
<rect x="971.5" y="463.5" width="890" height="213" fill="none" stroke="#fff"/>
<rect x="971.5" y="678.5" width="890" height="212" fill="none" stroke="#fff"/>
<g shape-rendering="crispEdges">
<line x1="1076.5" y1="33" x2="1076.5" y2="462" stroke="#fff" stroke-dasharray="3 3"/>
<line x1="1076.5" y1="463" x2="1076.5" y2="677" stroke="#fff" stroke-dasharray="3 3"/>
<line x1="1076.5" y1="678" x2="1076.5" y2="891" stroke="#fff" stroke-dasharray="3 3"/>
<line x1="1260.5" y1="33" x2="1260.5" y2="462" stroke="#fff" stroke-dasharray="3 3"/>
<line x1="1260.5" y1="463" x2="1260.5" y2="677" stroke="#fff" stroke-dasharray="3 3"/>
<line x1="1260.5" y1="678" x2="1260.5" y2="891" stroke="#fff" stroke-dasharray="3 3"/>
<line x1="1444.5" y1="33" x2="1444.5" y2="462" stroke="#fff" stroke-dasharray="3 3"/>
<line x1="1444.5" y1="463" x2="1444.5" y2="677" stroke="#fff" stroke-dasharray="3 3"/>
<line x1="1444.5" y1="678" x2="1444.5" y2="891" stroke="#fff" stroke-dasharray="3 3"/>
<line x1="1628.5" y1="33" x2="1628.5" y2="462" stroke="#fff" stroke-dasharray="3 3"/>
<line x1="1628.5" y1="463" x2="1628.5" y2="677" stroke="#fff" stroke-dasharray="3 3"/>
<line x1="1628.5" y1="678" x2="1628.5" y2="891" stroke="#fff" stroke-dasharray="3 3"/>
<line x1="1812.5" y1="33" x2="1812.5" y2="462" stroke="#fff" stroke-dasharray="3 3"/>
<line x1="1812.5" y1="463" x2="1812.5" y2="677" stroke="#fff" stroke-dasharray="3 3"/>
<line x1="1812.5" y1="678" x2="1812.5" y2="891" stroke="#fff" stroke-dasharray="3 3"/>
<rect x="972" y="340" width="1" height="48" fill="#ff0000"/>
<rect x="970.5" y="346.5" width="4" height="34" fill="#000" stroke="#ff0000"/>
<rect x="980" y="329" width="1" height="25" fill="#ff0000"/>
<rect x="978.5" y="329.5" width="4" height="16" fill="#000" stroke="#ff0000"/>
<rect x="988" y="329" width="1" height="35" fill="#00ff00"/>
<rect x="986.5" y="329.5" width="4" height="35" fill="#000" stroke="#00ff00"/>
<rect x="996" y="357" width="1" height="75" fill="#00ff00"/>
<rect x="994.5" y="364.5" width="4" height="59" fill="#000" stroke="#00ff00"/>
<rect x="1004" y="345" width="1" height="96" fill="#ff0000"/>
<rect x="1002.5" y="378.5" width="4" height="45" fill="#000" stroke="#ff0000"/>
<rect x="1012" y="347" width="1" height="65" fill="#00ff00"/>
<rect x="1010.5" y="378.5" width="4" height="30" fill="#000" stroke="#00ff00"/>
<rect x="1020" y="388" width="1" height="35" fill="#ff0000"/>
<rect x="1018.5" y="405.5" width="4" height="3" fill="#000" stroke="#ff0000"/>
<rect x="1028" y="378" width="1" height="43" fill="#ff0000"/>
<rect x="1026.5" y="381.5" width="4" height="24" fill="#000" stroke="#ff0000"/>
<rect x="1036" y="375" width="1" height="33" fill="#00ff00"/>
<rect x="1034.5" y="381.5" width="4" height="21" fill="#000" stroke="#00ff00"/>
<rect x="1044" y="388" width="1" height="34" fill="#00ff00"/>
<rect x="1042.5" y="402.5" width="4" height="17" fill="#000" stroke="#00ff00"/>
<rect x="1052" y="392" width="1" height="30" fill="#ff0000"/>
<rect x="1050.5" y="396.5" width="4" height="23" fill="#000" stroke="#ff0000"/>
<rect x="1060" y="356" width="1" height="46" fill="#ff0000"/>
<rect x="1058.5" y="366.5" width="4" height="30" fill="#000" stroke="#ff0000"/>
<rect x="1068" y="362" width="1" height="25" fill="#00ff00"/>
<rect x="1066.5" y="366.5" width="4" height="11" fill="#000" stroke="#00ff00"/>
<rect x="1076" y="365" width="1" height="12" fill="#ff0000"/>
<rect x="1074.5" y="368.5" width="4" height="8" fill="#000" stroke="#ff0000"/>
<rect x="1084" y="344" width="1" height="26" fill="#ff0000"/>
<rect x="1082.5" y="359.5" width="4" height="9" fill="#000" stroke="#ff0000"/>
<rect x="1092" y="343" width="1" height="29" fill="#ff0000"/>
<rect x="1090.5" y="354.5" width="4" height="6" fill="#000" stroke="#ff0000"/>
<rect x="1100" y="334" width="1" height="28" fill="#00ff00"/>
<rect x="1098.5" y="354.5" width="4" height="2" fill="#000" stroke="#00ff00"/>
<rect x="1108" y="334" width="1" height="25" fill="#ff0000"/>
<rect x="1106.5" y="338.5" width="4" height="17" fill="#000" stroke="#ff0000"/>
<rect x="1116" y="324" width="1" height="24" fill="#ff0000"/>
<rect x="1114.5" y="334.5" width="4" height="4" fill="#000" stroke="#ff0000"/>
<rect x="1124" y="329" width="1" height="17" fill="#00ff00"/>
<rect x="1122.5" y="334.5" width="4" height="8" fill="#000" stroke="#00ff00"/>
<rect x="1132" y="329" width="1" height="17" fill="#ff0000"/>
<rect x="1130.5" y="338.5" width="4" height="4" fill="#000" stroke="#ff0000"/>
<rect x="1140" y="267" width="1" height="75" fill="#ff0000"/>
<rect x="1138.5" y="274.5" width="4" height="64" fill="#000" stroke="#ff0000"/>
<rect x="1148" y="259" width="1" height="37" fill="#ff0000"/>
<rect x="1146.5" y="273.5" width="4" height="1" fill="#000" stroke="#ff0000"/>
<rect x="1156" y="257" width="1" height="43" fill="#00ff00"/>
<rect x="1154.5" y="273.5" width="4" height="21" fill="#000" stroke="#00ff00"/>
<rect x="1164" y="271" width="1" height="30" fill="#ff0000"/>
<rect x="1162.5" y="273.5" width="4" height="21" fill="#000" stroke="#ff0000"/>
<rect x="1172" y="261" width="1" height="24" fill="#00ff00"/>
<rect x="1170.5" y="273.5" width="4" height="11" fill="#000" stroke="#00ff00"/>
<rect x="1180" y="253" width="1" height="34" fill="#ff0000"/>
<rect x="1178.5" y="281.5" width="4" height="2" fill="#000" stroke="#ff0000"/>
<rect x="1188" y="133" width="1" height="159" fill="#ff0000"/>
<rect x="1186.5" y="145.5" width="4" height="136" fill="#000" stroke="#ff0000"/>
<rect x="1196" y="105" width="1" height="65" fill="#ff0000"/>
<rect x="1194.5" y="122.5" width="4" height="23" fill="#000" stroke="#ff0000"/>
<rect x="1204" y="80" width="1" height="50" fill="#ff0000"/>
<rect x="1202.5" y="81.5" width="4" height="41" fill="#000" stroke="#ff0000"/>
<rect x="1212" y="63" width="1" height="314" fill="#00ff00"/>
<rect x="1210.5" y="80.5" width="4" height="266" fill="#000" stroke="#00ff00"/>
<rect x="1220" y="218" width="1" height="144" fill="#ff0000"/>
<rect x="1218.5" y="230.5" width="4" height="117" fill="#000" stroke="#ff0000"/>
<rect x="1228" y="218" width="1" height="75" fill="#00ff00"/>
<rect x="1226.5" y="230.5" width="4" height="59" fill="#000" stroke="#00ff00"/>
<rect x="1236" y="251" width="1" height="40" fill="#ff0000"/>
<rect x="1234.5" y="263.5" width="4" height="25" fill="#000" stroke="#ff0000"/>
<rect x="1244" y="259" width="1" height="25" fill="#ff0000"/>
<rect x="1242.5" y="262.5" width="4" height="1" fill="#000" stroke="#ff0000"/>
<rect x="1252" y="260" width="1" height="25" fill="#00ff00"/>
<rect x="1250.5" y="262.5" width="4" height="17" fill="#000" stroke="#00ff00"/>
<rect x="1260" y="261" width="1" height="21" fill="#ff0000"/>
<rect x="1258.5" y="266.5" width="4" height="1" fill="#000" stroke="#ff0000"/>
<rect x="1268" y="260" width="1" height="22" fill="#ff0000"/>
<rect x="1266.5" y="260.5" width="4" height="4" fill="#000" stroke="#ff0000"/>
<rect x="1276" y="226" width="1" height="44" fill="#ff0000"/>
<rect x="1274.5" y="233.5" width="4" height="27" fill="#000" stroke="#ff0000"/>
<rect x="1284" y="225" width="1" height="56" fill="#00ff00"/>
<rect x="1282.5" y="233.5" width="4" height="23" fill="#000" stroke="#00ff00"/>
<rect x="1292" y="252" width="1" height="30" fill="#ff0000"/>
<rect x="1290.5" y="252.5" width="4" height="4" fill="#000" stroke="#ff0000"/>
<rect x="1300" y="212" width="1" height="42" fill="#ff0000"/>
<rect x="1298.5" y="219.5" width="4" height="33" fill="#000" stroke="#ff0000"/>
<rect x="1308" y="192" width="1" height="37" fill="#ff0000"/>
<rect x="1306.5" y="198.5" width="4" height="21" fill="#000" stroke="#ff0000"/>
<rect x="1316" y="196" width="1" height="37" fill="#ff0000"/>
<rect x="1314.5" y="199.5" width="4" height="1" fill="#000" stroke="#ff0000"/>
<rect x="1324" y="198" width="1" height="45" fill="#00ff00"/>
<rect x="1322.5" y="198.5" width="4" height="40" fill="#000" stroke="#00ff00"/>
<rect x="1332" y="203" width="1" height="40" fill="#ff0000"/>
<rect x="1330.5" y="213.5" width="4" height="25" fill="#000" stroke="#ff0000"/>
<rect x="1340" y="170" width="1" height="48" fill="#ff0000"/>
<rect x="1338.5" y="171.5" width="4" height="42" fill="#000" stroke="#ff0000"/>
<rect x="1348" y="166" width="1" height="53" fill="#00ff00"/>
<rect x="1346.5" y="171.5" width="4" height="38" fill="#000" stroke="#00ff00"/>
<rect x="1356" y="202" width="1" height="17" fill="#ff0000"/>
<rect x="1354.5" y="206.5" width="4" height="3" fill="#000" stroke="#ff0000"/>
<rect x="1364" y="182" width="1" height="24" fill="#ff0000"/>
<rect x="1362.5" y="185.5" width="4" height="21" fill="#000" stroke="#ff0000"/>
<rect x="1372" y="155" width="1" height="44" fill="#ff0000"/>
<rect x="1370.5" y="171.5" width="4" height="15" fill="#000" stroke="#ff0000"/>
<rect x="1380" y="102" width="1" height="85" fill="#ff0000"/>
<rect x="1378.5" y="124.5" width="4" height="47" fill="#000" stroke="#ff0000"/>
<rect x="1388" y="104" width="1" height="48" fill="#00ff00"/>
<rect x="1386.5" y="124.5" width="4" height="7" fill="#000" stroke="#00ff00"/>
<rect x="1396" y="116" width="1" height="33" fill="#ff0000"/>
<rect x="1394.5" y="120.5" width="4" height="11" fill="#000" stroke="#ff0000"/>
<rect x="1404" y="115" width="1" height="18" fill="#00ff00"/>
<rect x="1402.5" y="121.5" width="4" height="12" fill="#000" stroke="#00ff00"/>
<rect x="1412" y="129" width="1" height="23" fill="#00ff00"/>
<rect x="1410.5" y="133.5" width="4" height="2" fill="#000" stroke="#00ff00"/>
<rect x="1420" y="118" width="1" height="18" fill="#ff0000"/>
<rect x="1418.5" y="120.5" width="4" height="16" fill="#000" stroke="#ff0000"/>
<rect x="1428" y="118" width="1" height="29" fill="#00ff00"/>
<rect x="1426.5" y="120.5" width="4" height="14" fill="#000" stroke="#00ff00"/>
<rect x="1436" y="124" width="1" height="14" fill="#ff0000"/>
<rect x="1434.5" y="125.5" width="4" height="9" fill="#000" stroke="#ff0000"/>
<rect x="1444" y="120" width="1" height="11" fill="#00ff00"/>
<rect x="1442.5" y="127.5" width="4" height="3" fill="#000" stroke="#00ff00"/>
<rect x="1452" y="118" width="1" height="14" fill="#ff0000"/>
<rect x="1450.5" y="123.5" width="4" height="6" fill="#000" stroke="#ff0000"/>
<rect x="1460" y="122" width="1" height="27" fill="#00ff00"/>
<rect x="1458.5" y="123.5" width="4" height="26" fill="#000" stroke="#00ff00"/>
<rect x="1468" y="133" width="1" height="43" fill="#00ff00"/>
<rect x="1466.5" y="148.5" width="4" height="2" fill="#000" stroke="#00ff00"/>
<rect x="1476" y="143" width="1" height="25" fill="#00ff00"/>
<rect x="1474.5" y="150.5" width="4" height="9" fill="#000" stroke="#00ff00"/>
<rect x="1484" y="149" width="1" height="21" fill="#00ff00"/>
<rect x="1482.5" y="159.5" width="4" height="11" fill="#000" stroke="#00ff00"/>
<rect x="1492" y="168" width="1" height="18" fill="#ff0000"/>
<rect x="1490.5" y="168.5" width="4" height="2" fill="#000" stroke="#ff0000"/>
<rect x="1500" y="146" width="1" height="26" fill="#ff0000"/>
<rect x="1498.5" y="152.5" width="4" height="16" fill="#000" stroke="#ff0000"/>
<rect x="1508" y="137" width="1" height="39" fill="#00ff00"/>
<rect x="1506.5" y="152.5" width="4" height="7" fill="#000" stroke="#00ff00"/>
<rect x="1516" y="154" width="1" height="49" fill="#00ff00"/>
<rect x="1514.5" y="159.5" width="4" height="38" fill="#000" stroke="#00ff00"/>
<rect x="1524" y="170" width="1" height="34" fill="#ff0000"/>
<rect x="1522.5" y="180.5" width="4" height="17" fill="#000" stroke="#ff0000"/>
<rect x="1532" y="165" width="1" height="26" fill="#ff0000"/>
<rect x="1530.5" y="173.5" width="4" height="7" fill="#000" stroke="#ff0000"/>
<rect x="1540" y="167" width="1" height="23" fill="#00ff00"/>
<rect x="1538.5" y="173.5" width="4" height="15" fill="#000" stroke="#00ff00"/>
<rect x="1548" y="159" width="1" height="33" fill="#ff0000"/>
<rect x="1546.5" y="173.5" width="4" height="15" fill="#000" stroke="#ff0000"/>
<rect x="1556" y="156" width="1" height="106" fill="#00ff00"/>
<rect x="1554.5" y="173.5" width="4" height="36" fill="#000" stroke="#00ff00"/>
<rect x="1564" y="194" width="1" height="125" fill="#00ff00"/>
<rect x="1562.5" y="209.5" width="4" height="95" fill="#000" stroke="#00ff00"/>
<rect x="1572" y="304" width="1" height="78" fill="#00ff00"/>
<rect x="1570.5" y="304.5" width="4" height="42" fill="#000" stroke="#00ff00"/>
<rect x="1580" y="303" width="1" height="50" fill="#ff0000"/>
<rect x="1578.5" y="306.5" width="4" height="39" fill="#000" stroke="#ff0000"/>
<rect x="1588" y="274" width="1" height="34" fill="#ff0000"/>
<rect x="1586.5" y="284.5" width="4" height="22" fill="#000" stroke="#ff0000"/>
<rect x="1596" y="267" width="1" height="34" fill="#00ff00"/>
<rect x="1594.5" y="284.5" width="4" height="11" fill="#000" stroke="#00ff00"/>
<rect x="1604" y="265" width="1" height="29" fill="#ff0000"/>
<rect x="1602.5" y="268.5" width="4" height="26" fill="#000" stroke="#ff0000"/>
<rect x="1612" y="254" width="1" height="22" fill="#00ff00"/>
<rect x="1610.5" y="269.5" width="4" height="1" fill="#000" stroke="#00ff00"/>
<rect x="1620" y="261" width="1" height="16" fill="#00ff00"/>
<rect x="1618.5" y="270.5" width="4" height="6" fill="#000" stroke="#00ff00"/>
<rect x="1628" y="271" width="1" height="14" fill="#00ff00"/>
<rect x="1626.5" y="271.5" width="4" height="12" fill="#000" stroke="#00ff00"/>
<rect x="1636" y="268" width="1" height="15" fill="#ff0000"/>
<rect x="1634.5" y="268.5" width="4" height="15" fill="#000" stroke="#ff0000"/>
<rect x="1644" y="260" width="1" height="28" fill="#00ff00"/>
<rect x="1642.5" y="268.5" width="4" height="18" fill="#000" stroke="#00ff00"/>
<rect x="1652" y="272" width="1" height="51" fill="#00ff00"/>
<rect x="1650.5" y="286.5" width="4" height="24" fill="#000" stroke="#00ff00"/>
<rect x="1660" y="306" width="1" height="15" fill="#00ff00"/>
<rect x="1658.5" y="311.5" width="4" height="10" fill="#000" stroke="#00ff00"/>
<rect x="1668" y="321" width="1" height="13" fill="#00ff00"/>
<rect x="1666.5" y="321.5" width="4" height="8" fill="#000" stroke="#00ff00"/>
<rect x="969" y="34" width="2" height="427" fill="#000"/>
<rect x="971" y="33" width="1" height="429" fill="#fff"/>
<rect x="972" y="80" width="889" height="1" fill="#ffff00"/>
<line x1="972" y1="130.5" x2="1861" y2="130.5" stroke="#00ff00" stroke-dasharray="18 6"/>
<rect x="972" y="181" width="889" height="1" fill="#ffff00"/>
<line x1="972" y1="211.5" x2="1861" y2="211.5" stroke="#00ff00" stroke-dasharray="18 6"/>
<rect x="972" y="243" width="889" height="1" fill="#ffff00"/>
<line x1="972" y1="282.5" x2="1861" y2="282.5" stroke="#00ff00" stroke-dasharray="18 6"/>
<rect x="972" y="320" width="889" height="1" fill="#ff0000"/>
<rect x="972" y="329" width="889" height="1" fill="#778899"/>
<line x1="972" y1="363.5" x2="1861" y2="363.5" stroke="#00ff00" stroke-dasharray="18 6"/>
<rect x="972" y="406" width="889" height="1" fill="#ffff00"/>
<line x1="972" y1="456.5" x2="1861" y2="456.5" stroke="#00ff00" stroke-dasharray="18 6"/>
<polyline points="972.5,361.5 980.5,326.5 1004.5,441.5 1004.5,345.5 1020.5,424.5 1036.5,373.5 1052.5,421.5" fill="none" stroke="#fff" stroke-width="1"/>
<polyline points="972.5,389.5 1004.5,442.5 1212.0,62.5 1212.0,377.5 1380.5,101.5 1572.5,382.5 1612.5,254.5" fill="none" stroke="#00ffff" stroke-width="1.8" stroke-linejoin="round"/>
<rect x="1211" y="62" width="2" height="316" fill="#00ffff"/>
<path d="M1678,34h9l-4.5,5z" fill="#778899"/>
<line x1="973" y1="555.5" x2="1861" y2="555.5" stroke="#ff0000" stroke-dasharray="3 3"/>
<line x1="973" y1="598.5" x2="1861" y2="598.5" stroke="#ff0000" stroke-dasharray="3 3"/>
<line x1="973" y1="641.5" x2="1861" y2="641.5" stroke="#ff0000" stroke-dasharray="3 3"/>
<rect x="972" y="599" width="1" height="12" fill="#008000"/>
<rect x="980" y="599" width="1" height="8" fill="#008000"/>
<rect x="988" y="599" width="1" height="11" fill="#008000"/>
<rect x="996" y="599" width="1" height="25" fill="#008000"/>
<rect x="1004" y="599" width="1" height="24" fill="#008000"/>
<rect x="1012" y="599" width="1" height="29" fill="#008000"/>
<rect x="1020" y="599" width="1" height="30" fill="#008000"/>
<rect x="1028" y="599" width="1" height="25" fill="#008000"/>
<rect x="1036" y="599" width="1" height="26" fill="#008000"/>
<rect x="1044" y="599" width="1" height="27" fill="#008000"/>
<rect x="1052" y="599" width="1" height="21" fill="#008000"/>
<rect x="1060" y="599" width="1" height="9" fill="#008000"/>
<rect x="1068" y="599" width="1" height="4" fill="#008000"/>
<rect x="1076" y="596" width="1" height="2" fill="#ff0000"/>
<rect x="1084" y="592" width="1" height="6" fill="#ff0000"/>
<rect x="1092" y="588" width="1" height="10" fill="#ff0000"/>
<rect x="1100" y="585" width="1" height="13" fill="#ff0000"/>
<rect x="1108" y="582" width="1" height="16" fill="#ff0000"/>
<rect x="1116" y="581" width="1" height="17" fill="#ff0000"/>
<rect x="1124" y="583" width="1" height="15" fill="#ff0000"/>
<rect x="1132" y="584" width="1" height="14" fill="#ff0000"/>
<rect x="1140" y="574" width="1" height="24" fill="#ff0000"/>
<rect x="1148" y="568" width="1" height="30" fill="#ff0000"/>
<rect x="1156" y="570" width="1" height="28" fill="#ff0000"/>
<rect x="1164" y="569" width="1" height="29" fill="#ff0000"/>
<rect x="1172" y="574" width="1" height="24" fill="#ff0000"/>
<rect x="1180" y="578" width="1" height="20" fill="#ff0000"/>
<rect x="1188" y="557" width="1" height="41" fill="#ff0000"/>
<rect x="1196" y="541" width="1" height="57" fill="#ff0000"/>
<rect x="1204" y="526" width="1" height="72" fill="#ff0000"/>
<rect x="1212" y="572" width="1" height="26" fill="#ff0000"/>
<rect x="1220" y="583" width="1" height="15" fill="#ff0000"/>
<rect x="1228" y="599" width="1" height="6" fill="#008000"/>
<rect x="1236" y="599" width="1" height="18" fill="#008000"/>
<rect x="1244" y="599" width="1" height="27" fill="#008000"/>
<rect x="1252" y="599" width="1" height="38" fill="#008000"/>
<rect x="1260" y="599" width="1" height="42" fill="#008000"/>
<rect x="1268" y="599" width="1" height="37" fill="#008000"/>
<rect x="1276" y="599" width="1" height="24" fill="#008000"/>
<rect x="1284" y="599" width="1" height="21" fill="#008000"/>
<rect x="1292" y="599" width="1" height="17" fill="#008000"/>
<rect x="1300" y="599" width="1" height="9" fill="#008000"/>
<rect x="1316" y="592" width="1" height="6" fill="#ff0000"/>
<rect x="1324" y="597" width="1" height="1" fill="#ff0000"/>
<rect x="1332" y="597" width="1" height="1" fill="#ff0000"/>
<rect x="1340" y="589" width="1" height="9" fill="#ff0000"/>
<rect x="1348" y="593" width="1" height="5" fill="#ff0000"/>
<rect x="1356" y="596" width="1" height="2" fill="#ff0000"/>
<rect x="1364" y="596" width="1" height="2" fill="#ff0000"/>
<rect x="1372" y="594" width="1" height="4" fill="#ff0000"/>
<rect x="1380" y="583" width="1" height="15" fill="#ff0000"/>
<rect x="1388" y="579" width="1" height="19" fill="#ff0000"/>
<rect x="1396" y="576" width="1" height="22" fill="#ff0000"/>
<rect x="1404" y="579" width="1" height="19" fill="#ff0000"/>
<rect x="1412" y="582" width="1" height="16" fill="#ff0000"/>
<rect x="1420" y="584" width="1" height="14" fill="#ff0000"/>
<rect x="1428" y="591" width="1" height="7" fill="#ff0000"/>
<rect x="1436" y="596" width="1" height="2" fill="#ff0000"/>
<rect x="1452" y="599" width="1" height="4" fill="#008000"/>
<rect x="1460" y="599" width="1" height="12" fill="#008000"/>
<rect x="1468" y="599" width="1" height="17" fill="#008000"/>
<rect x="1476" y="599" width="1" height="23" fill="#008000"/>
<rect x="1484" y="599" width="1" height="29" fill="#008000"/>
<rect x="1492" y="599" width="1" height="30" fill="#008000"/>
<rect x="1500" y="599" width="1" height="29" fill="#008000"/>
<rect x="1508" y="599" width="1" height="27" fill="#008000"/>
<rect x="1516" y="599" width="1" height="31" fill="#008000"/>
<rect x="1524" y="599" width="1" height="30" fill="#008000"/>
<rect x="1532" y="599" width="1" height="27" fill="#008000"/>
<rect x="1540" y="599" width="1" height="26" fill="#008000"/>
<rect x="1548" y="599" width="1" height="21" fill="#008000"/>
<rect x="1556" y="599" width="1" height="24" fill="#008000"/>
<rect x="1564" y="599" width="1" height="44" fill="#008000"/>
<rect x="1572" y="599" width="1" height="64" fill="#008000"/>
<rect x="1580" y="599" width="1" height="66" fill="#008000"/>
<rect x="1588" y="599" width="1" height="59" fill="#008000"/>
<rect x="1596" y="599" width="1" height="54" fill="#008000"/>
<rect x="1604" y="599" width="1" height="41" fill="#008000"/>
<rect x="1612" y="599" width="1" height="29" fill="#008000"/>
<rect x="1620" y="599" width="1" height="16" fill="#008000"/>
<rect x="1628" y="599" width="1" height="8" fill="#008000"/>
<rect x="1636" y="597" width="1" height="1" fill="#ff0000"/>
<rect x="1644" y="595" width="1" height="3" fill="#ff0000"/>
<rect x="1660" y="599" width="1" height="3" fill="#008000"/>
<rect x="1668" y="599" width="1" height="8" fill="#008000"/>
<polyline points="972.5,548.8 980.5,549.1 988.5,550.6 996.5,554.3 1004.5,559.4 1012.6,565.1 1020.6,570.1 1028.6,573.9 1036.6,577.6 1044.6,582.4 1052.6,587.4 1060.6,591.4 1068.6,594.4 1076.6,596.1 1084.6,596.9 1092.6,596.9 1100.6,595.6 1108.7,592.6 1116.7,589.9 1124.7,586.9 1132.7,584.4 1140.7,580.6 1148.7,576.1 1156.7,571.9 1164.7,567.6 1172.7,562.6 1180.7,558.1 1188.7,551.8 1196.7,542.6 1204.7,532.6 1212.8,525.6 1220.8,520.6 1228.8,516.8 1236.8,514.8 1244.8,514.8 1252.8,514.8 1260.8,517.6 1268.8,523.1 1276.8,530.6 1284.8,536.8 1292.8,541.8 1300.8,546.1 1308.9,549.3 1316.9,551.3 1324.9,551.8 1332.9,551.8 1340.9,551.1 1348.9,550.8 1356.9,549.3 1364.9,547.3 1372.9,546.1 1380.9,544.8 1388.9,542.6 1396.9,538.8 1404.9,535.6 1413.0,533.6 1420.5,530.6 1428.5,527.6 1436.5,524.3 1444.5,523.1 1452.5,523.1 1460.5,523.1 1468.5,525.1 1476.6,528.1 1484.6,531.8 1492.6,535.6 1500.6,540.6 1508.6,545.1 1516.6,550.6 1524.6,556.9 1532.6,563.1 1540.6,568.1 1548.6,573.1 1556.6,578.1 1564.6,584.4 1572.7,593.9 1580.7,603.1 1588.7,613.7 1596.7,622.7 1604.7,631.9 1612.7,639.9 1620.7,647.7 1628.7,654.4 1636.7,658.2 1644.7,659.5 1652.7,660.2 1660.7,660.7 1668.7,661.0" fill="none" stroke="#ffff00" stroke-width="1"/>
<polyline points="972.5,558.1 980.5,556.4 988.5,560.6 996.5,573.1 1004.5,578.1 1012.6,585.6 1020.6,591.4 1028.6,592.6 1036.6,597.4 1044.6,602.6 1052.6,603.9 1060.6,600.1 1068.6,598.1 1076.6,594.9 1084.6,591.4 1092.6,587.4 1100.6,585.6 1108.7,581.4 1116.7,577.4 1124.7,575.1 1132.7,573.6 1140.7,563.1 1148.7,553.8 1156.7,550.1 1164.7,544.3 1172.7,543.1 1180.7,541.3 1188.7,518.1 1196.7,495.5 1204.7,475.0 1212.8,503.0 1220.8,507.3 1228.8,519.8 1236.8,528.1 1244.8,535.6 1252.8,544.3 1260.8,550.1 1268.8,552.6 1276.8,551.8 1284.8,555.6 1292.8,558.1 1300.8,554.8 1308.9,550.1 1316.9,545.6 1324.9,550.1 1332.9,550.1 1340.9,543.8 1348.9,545.6 1356.9,546.8 1364.9,544.8 1372.9,541.8 1380.9,533.1 1388.9,526.8 1396.9,521.8 1404.9,519.8 1413.0,521.1 1420.5,518.8 1428.5,521.1 1436.5,522.6 1444.5,525.1 1452.5,526.8 1460.5,533.1 1468.5,539.8 1476.6,546.8 1484.6,554.3 1492.6,559.9 1500.6,562.4 1508.6,566.4 1516.6,575.6 1524.6,580.6 1532.6,583.9 1540.6,588.1 1548.6,589.9 1556.6,596.9 1564.6,618.2 1572.7,644.4 1580.7,655.2 1588.7,659.5 1596.7,664.5 1604.7,662.7 1612.7,662.0 1620.7,660.7 1628.7,659.5 1636.7,657.0 1644.7,657.0 1652.7,659.5 1660.7,662.7 1668.7,666.2" fill="none" stroke="#00ffff" stroke-width="1"/>
<line x1="973" y1="737.5" x2="1861" y2="737.5" stroke="#ff0000" stroke-dasharray="3 3"/>
<line x1="973" y1="787.5" x2="1861" y2="787.5" stroke="#ff0000" stroke-dasharray="3 3"/>
<line x1="973" y1="837.5" x2="1861" y2="837.5" stroke="#ff0000" stroke-dasharray="3 3"/>
<polyline points="972.5,787.6 980.5,783.1 988.5,783.6 996.5,791.9 1004.5,793.9 1012.5,798.1 1020.5,801.9 1028.5,801.4 1036.5,802.4 1044.5,806.4 1052.5,808.6 1060.5,802.6 1068.5,794.4 1076.5,786.4 1084.5,776.9 1092.5,766.8 1100.5,760.1 1108.5,751.8 1116.5,745.6 1124.5,742.3 1132.5,740.1 1140.5,736.8 1148.5,733.8 1156.5,735.1 1164.5,735.1 1172.5,736.8 1180.5,738.8 1188.5,736.8 1196.5,733.6 1204.5,729.8 1212.5,741.1 1220.5,752.6 1228.5,765.1 1236.5,775.6 1244.5,785.1 1252.5,792.4 1260.5,797.6 1268.5,800.1 1276.5,801.9 1284.5,796.4 1292.5,791.9 1300.5,781.9 1308.5,770.1 1316.5,758.6 1324.5,756.8 1332.5,754.8 1340.5,748.8 1348.5,748.1 1356.5,749.3 1364.5,748.6 1372.5,746.3 1380.5,744.8 1388.5,743.1 1396.5,740.1 1404.5,739.8 1412.5,741.3 1420.5,740.6 1428.5,741.8 1436.5,743.1 1444.5,745.6 1452.5,749.3 1460.5,763.1 1468.5,773.1 1476.5,784.4 1484.5,796.4 1492.5,804.9 1500.5,807.6 1508.5,808.1 1516.5,814.4 1524.5,817.6 1532.5,817.6 1540.5,818.9 1548.5,816.4 1556.5,813.9 1564.5,817.6 1572.5,821.9 1580.5,823.7 1588.5,821.4 1596.5,818.9 1604.5,814.4 1612.5,809.4 1620.5,804.9 1628.5,800.6 1636.5,790.1 1644.5,781.4 1652.5,785.1 1660.5,795.1 1668.5,806.9" fill="none" stroke="#20b2aa" stroke-width="1"/>
<polyline points="972.5,793.1 980.5,775.1 988.5,783.1 996.5,808.9 1004.5,798.9 1012.5,806.4 1020.5,809.9 1028.5,801.4 1036.5,804.4 1044.5,816.1 1052.5,811.9 1060.5,787.6 1068.5,778.1 1076.5,768.8 1084.5,758.1 1092.5,748.1 1100.5,746.3 1108.5,734.3 1116.5,730.6 1124.5,734.3 1132.5,736.8 1140.5,729.8 1148.5,728.1 1156.5,738.1 1164.5,736.3 1172.5,740.1 1180.5,743.8 1188.5,733.1 1196.5,726.8 1204.5,721.3 1212.5,764.3 1220.5,774.4 1228.5,790.1 1236.5,797.6 1244.5,801.9 1252.5,806.4 1260.5,808.6 1268.5,808.6 1276.5,804.4 1284.5,785.1 1292.5,783.6 1300.5,763.6 1308.5,746.8 1316.5,736.1 1324.5,753.6 1332.5,750.1 1340.5,736.8 1348.5,745.6 1356.5,751.8 1364.5,747.6 1372.5,743.1 1380.5,738.8 1388.5,738.6 1396.5,734.8 1404.5,738.6 1412.5,743.6 1420.5,739.3 1428.5,745.6 1436.5,745.1 1444.5,749.3 1452.5,756.8 1460.5,789.4 1468.5,793.1 1476.5,804.4 1484.5,820.7 1492.5,823.9 1500.5,811.4 1508.5,809.9 1516.5,826.9 1524.5,824.9 1532.5,815.6 1540.5,821.9 1548.5,812.6 1556.5,808.6 1564.5,823.7 1572.5,831.9 1580.5,826.9 1588.5,816.9 1596.5,813.9 1604.5,805.6 1612.5,799.4 1620.5,796.9 1628.5,792.4 1636.5,768.8 1644.5,765.6 1652.5,788.1 1660.5,815.6 1668.5,831.9" fill="none" stroke="#ffff00" stroke-width="1"/>
</g>
<text x="974" y="78" fill="#fff" font-size="9.33" stroke="#fff" stroke-width=".1">3</text>
<text x="974" y="128" fill="#fff" font-size="9.33" stroke="#fff" stroke-width=".1">2.5</text>
<text x="974" y="179" fill="#fff" font-size="9.33" stroke="#fff" stroke-width=".1">2</text>
<text x="974" y="209" fill="#fff" font-size="9.33" stroke="#fff" stroke-width=".1">1.5</text>
<text x="974" y="241" fill="#fff" font-size="9.33" stroke="#fff" stroke-width=".1">1</text>
<text x="974" y="280" fill="#fff" font-size="9.33" stroke="#fff" stroke-width=".1">0.5</text>
<text x="974" y="318" fill="#fff" font-size="9.33" stroke="#fff" stroke-width=".1">0</text>
<text x="974" y="361" fill="#fff" font-size="9.33" stroke="#fff" stroke-width=".1">-0.5</text>
<text x="974" y="404" fill="#fff" font-size="9.33" stroke="#fff" stroke-width=".1">-1</text>
<text x="974" y="454" fill="#fff" font-size="9.33" stroke="#fff" stroke-width=".1">-1.5</text>
<rect x="974" y="36" width="228" height="10" fill="#000"/>
<path d="M975,40h7l-3.5,4z" fill="#fff"/>
<text x="987" y="45" fill="#fff" font-size="9.33" stroke="#fff" stroke-width=".1">XAUUSD.E,H1  1788.41 1788.41 1787.23 1787.65</text>
<text x="976" y="476" fill="#fff" font-size="9.33" stroke="#fff" stroke-width=".1">MACD(12,26,9) -3.152 -2.880 0.000 -0.354</text>
<text x="976" y="691" fill="#fff" font-size="9.33" stroke="#fff" stroke-width=".1">KDJ(9,3,3) 22.9918 37.5036 -6.0319</text>
<rect x="1861" y="62" width="3" height="1" fill="#fff"/>
<text x="1867" y="66" fill="#fff" font-size="9.33" stroke="#fff" stroke-width=".1">1813.85</text>
<rect x="1861" y="95" width="3" height="1" fill="#fff"/>
<text x="1867" y="99" fill="#fff" font-size="9.33" stroke="#fff" stroke-width=".1">1810.65</text>
<rect x="1861" y="128" width="3" height="1" fill="#fff"/>
<text x="1867" y="132" fill="#fff" font-size="9.33" stroke="#fff" stroke-width=".1">1807.40</text>
<rect x="1861" y="161" width="3" height="1" fill="#fff"/>
<text x="1867" y="165" fill="#fff" font-size="9.33" stroke="#fff" stroke-width=".1">1804.15</text>
<rect x="1861" y="194" width="3" height="1" fill="#fff"/>
<text x="1867" y="198" fill="#fff" font-size="9.33" stroke="#fff" stroke-width=".1">1800.90</text>
<rect x="1861" y="227" width="3" height="1" fill="#fff"/>
<text x="1867" y="231" fill="#fff" font-size="9.33" stroke="#fff" stroke-width=".1">1797.65</text>
<rect x="1861" y="260" width="3" height="1" fill="#fff"/>
<text x="1867" y="264" fill="#fff" font-size="9.33" stroke="#fff" stroke-width=".1">1794.40</text>
<rect x="1861" y="293" width="3" height="1" fill="#fff"/>
<text x="1867" y="297" fill="#fff" font-size="9.33" stroke="#fff" stroke-width=".1">1791.15</text>
<rect x="1861" y="326" width="3" height="1" fill="#fff"/>
<text x="1867" y="330" fill="#fff" font-size="9.33" stroke="#fff" stroke-width=".1">1787.90</text>
<rect x="1861" y="359" width="3" height="1" fill="#fff"/>
<text x="1867" y="363" fill="#fff" font-size="9.33" stroke="#fff" stroke-width=".1">1784.65</text>
<rect x="1861" y="392" width="3" height="1" fill="#fff"/>
<text x="1867" y="396" fill="#fff" font-size="9.33" stroke="#fff" stroke-width=".1">1781.40</text>
<rect x="1861" y="425" width="3" height="1" fill="#fff"/>
<text x="1867" y="429" fill="#fff" font-size="9.33" stroke="#fff" stroke-width=".1">1778.15</text>
<rect x="1861" y="458" width="3" height="1" fill="#fff"/>
<text x="1867" y="462" fill="#fff" font-size="9.33" stroke="#fff" stroke-width=".1">1774.90</text>
<rect x="1863" y="74" width="41" height="11" fill="#ffff00"/>
<text x="1867" y="83" fill="#000" font-size="9.33" stroke="#000" stroke-width=".1">1812.10</text>
<rect x="1863" y="124" width="41" height="11" fill="#00ff00"/>
<text x="1867" y="133" fill="#000" font-size="9.33" stroke="#000" stroke-width=".1">1807.20</text>
<rect x="1863" y="175" width="41" height="11" fill="#ffff00"/>
<text x="1867" y="184" fill="#000" font-size="9.33" stroke="#000" stroke-width=".1">1802.20</text>
<rect x="1863" y="205" width="41" height="11" fill="#00ff00"/>
<text x="1867" y="214" fill="#000" font-size="9.33" stroke="#000" stroke-width=".1">1799.20</text>
<rect x="1863" y="237" width="41" height="11" fill="#ffff00"/>
<text x="1867" y="246" fill="#000" font-size="9.33" stroke="#000" stroke-width=".1">1796.10</text>
<rect x="1863" y="276" width="41" height="11" fill="#00ff00"/>
<text x="1867" y="285" fill="#000" font-size="9.33" stroke="#000" stroke-width=".1">1792.30</text>
<rect x="1863" y="324" width="41" height="11" fill="#fff"/>
<text x="1867" y="333" fill="#000" font-size="9.33" stroke="#000" stroke-width=".1">1787.65</text>
<rect x="1863" y="314" width="41" height="11" fill="#ff0000"/>
<text x="1867" y="323" fill="#000" font-size="9.33" stroke="#000" stroke-width=".1">1788.50</text>
<rect x="1863" y="357" width="41" height="11" fill="#00ff00"/>
<text x="1867" y="366" fill="#000" font-size="9.33" stroke="#000" stroke-width=".1">1784.30</text>
<rect x="1863" y="400" width="41" height="11" fill="#ffff00"/>
<text x="1867" y="409" fill="#000" font-size="9.33" stroke="#000" stroke-width=".1">1780.10</text>
<rect x="1863" y="450" width="41" height="11" fill="#00ff00"/>
<text x="1867" y="459" fill="#000" font-size="9.33" stroke="#000" stroke-width=".1">1775.10</text>
<text x="1865" y="474" fill="#fff" font-size="9.33" stroke="#fff" stroke-width=".1">6.234</text>
<text x="1865" y="673" fill="#fff" font-size="9.33" stroke="#fff" stroke-width=".1">-3.599</text>
<text x="1865" y="689" fill="#fff" font-size="9.33" stroke="#fff" stroke-width=".1">114.2376</text>
<text x="1865" y="874" fill="#fff" font-size="9.33" stroke="#fff" stroke-width=".1">0.00</text>
<rect x="1861" y="870" width="3" height="1" fill="#fff"/>
<text x="1865" y="887" fill="#fff" font-size="9.33" stroke="#fff" stroke-width=".1">-11.759</text>
<rect x="1861" y="465" width="3" height="1" fill="#fff"/>
<rect x="1861" y="675" width="3" height="1" fill="#fff"/>
<rect x="1861" y="680" width="3" height="1" fill="#fff"/>
<rect x="1861" y="889" width="3" height="1" fill="#fff"/>
<rect x="1861" y="555" width="3" height="1" fill="#fff"/>
<text x="1865" y="559" fill="#fff" font-size="9.33" stroke="#fff" stroke-width=".1">2</text>
<rect x="1861" y="598" width="3" height="1" fill="#fff"/>
<text x="1865" y="602" fill="#fff" font-size="9.33" stroke="#fff" stroke-width=".1">0.00</text>
<rect x="1861" y="641" width="3" height="1" fill="#fff"/>
<text x="1865" y="645" fill="#fff" font-size="9.33" stroke="#fff" stroke-width=".1">-2</text>
<rect x="1861" y="737" width="3" height="1" fill="#fff"/>
<text x="1865" y="741" fill="#fff" font-size="9.33" stroke="#fff" stroke-width=".1">80</text>
<rect x="1861" y="787" width="3" height="1" fill="#fff"/>
<text x="1865" y="791" fill="#fff" font-size="9.33" stroke="#fff" stroke-width=".1">50</text>
<rect x="1861" y="837" width="3" height="1" fill="#fff"/>
<text x="1865" y="841" fill="#fff" font-size="9.33" stroke="#fff" stroke-width=".1">20</text>
<rect x="972" y="891" width="1" height="3" fill="#fff"/>
<text x="971" y="903" fill="#fff" font-size="9.33" stroke="#fff" stroke-width=".1">21 Oct 2021</text>
<rect x="1036" y="891" width="1" height="3" fill="#fff"/>
<text x="1035" y="903" fill="#fff" font-size="9.33" stroke="#fff" stroke-width=".1">21 Oct 19:00</text>
<rect x="1100" y="891" width="1" height="3" fill="#fff"/>
<text x="1099" y="903" fill="#fff" font-size="9.33" stroke="#fff" stroke-width=".1">22 Oct 04:00</text>
<rect x="1164" y="891" width="1" height="3" fill="#fff"/>
<text x="1163" y="903" fill="#fff" font-size="9.33" stroke="#fff" stroke-width=".1">22 Oct 12:00</text>
<rect x="1228" y="891" width="1" height="3" fill="#fff"/>
<text x="1227" y="903" fill="#fff" font-size="9.33" stroke="#fff" stroke-width=".1">22 Oct 20:00</text>
<rect x="1292" y="891" width="1" height="3" fill="#fff"/>
<text x="1291" y="903" fill="#fff" font-size="9.33" stroke="#fff" stroke-width=".1">25 Oct 05:00</text>
<rect x="1356" y="891" width="1" height="3" fill="#fff"/>
<text x="1355" y="903" fill="#fff" font-size="9.33" stroke="#fff" stroke-width=".1">25 Oct 13:00</text>
<rect x="1420" y="891" width="1" height="3" fill="#fff"/>
<text x="1419" y="903" fill="#fff" font-size="9.33" stroke="#fff" stroke-width=".1">25 Oct 21:00</text>
<rect x="1484" y="891" width="1" height="3" fill="#fff"/>
<text x="1483" y="903" fill="#fff" font-size="9.33" stroke="#fff" stroke-width=".1">26 Oct 06:00</text>
<rect x="1548" y="891" width="1" height="3" fill="#fff"/>
<text x="1547" y="903" fill="#fff" font-size="9.33" stroke="#fff" stroke-width=".1">26 Oct 14:00</text>
<rect x="1612" y="891" width="1" height="3" fill="#fff"/>
<text x="1611" y="903" fill="#fff" font-size="9.33" stroke="#fff" stroke-width=".1">26 Oct 22:00</text>
<g fill="#fff"><circle cx="1639.1" cy="869.6" r="15.1"/><path d="M1651,879Q1641,884.5 1633.7,890.4L1636,877z"/></g>
<path d="M1647.4,856.4C1641,857 1635.6,861 1633.3,868.6L1627.5,889.6L1633.4,889.6L1637.4,873.5C1638.6,867 1641.2,860.6 1647.4,857.9Z" fill="#000"/>
<rect x="1629" y="868" width="26" height="2.9" fill="#000"/>
<text x="1664" y="882" fill="#fff" font-size="33" textLength="162.2" lengthAdjust="spacingAndGlyphs">@扬帆起航</text>
<text x="1827" y="882" fill="#fff" font-size="36.5" textLength="74" lengthAdjust="spacingAndGlyphs">2021</text>
</svg>
</body></html>
